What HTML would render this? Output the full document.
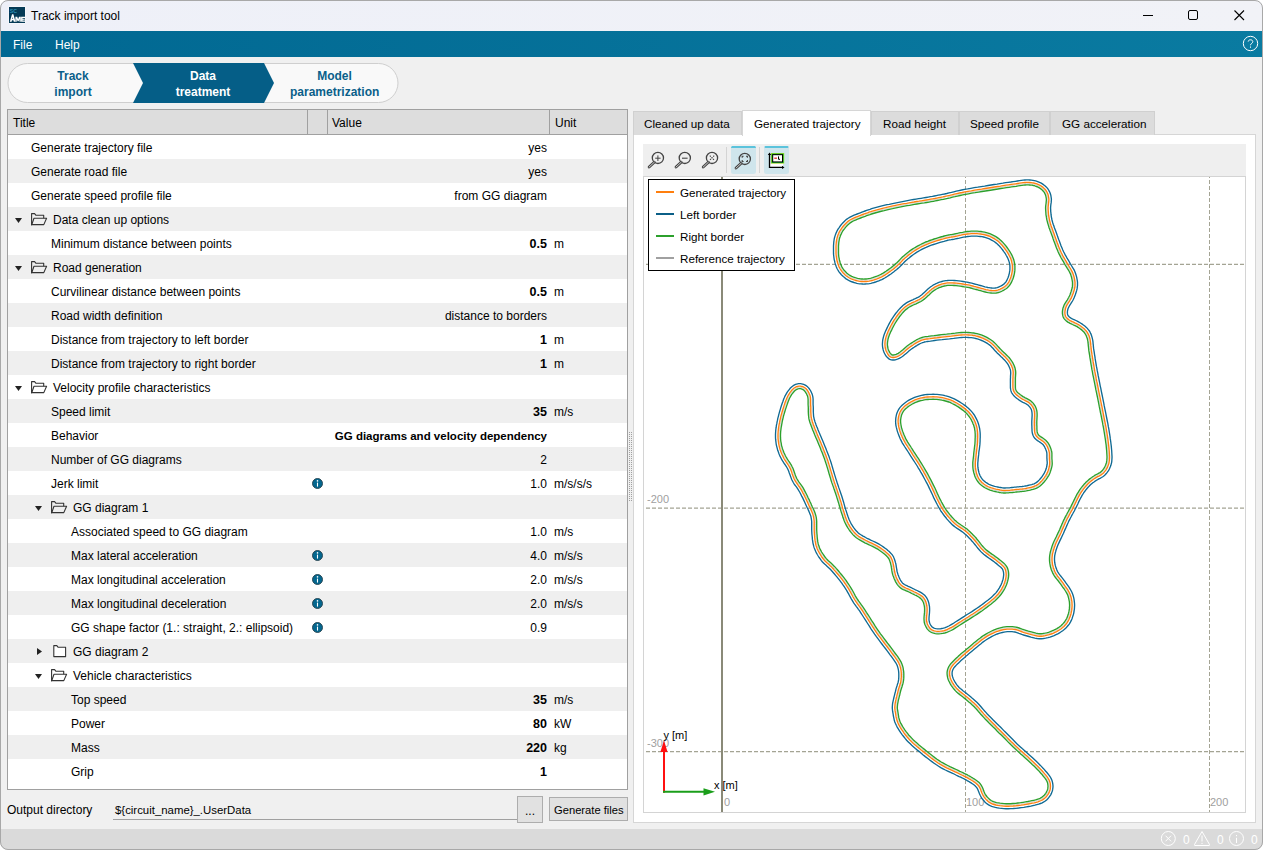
<!DOCTYPE html>
<html><head><meta charset="utf-8"><style>
*{box-sizing:border-box;margin:0;padding:0}
html,body{width:1263px;height:850px;overflow:hidden;background:#fff}
body{font-family:"Liberation Sans",sans-serif;font-size:12px;color:#000;position:relative}
.a{position:absolute}
.t{position:absolute;white-space:nowrap;line-height:14px}
#win{position:absolute;left:0;top:0;width:1263px;height:850px;background:#f0f0f0;overflow:hidden}
.row{position:absolute;left:0;width:619px;height:24px}
.g{background:#efefef}
.row .t{top:6px}
.v{position:absolute;right:80px;top:6px;white-space:nowrap;line-height:14px;text-align:right}
.u{position:absolute;left:546px;top:6px;white-space:nowrap;line-height:14px}
.b{font-weight:bold;font-size:12.5px;top:5.5px!important}
.bl{font-weight:bold;font-size:11.5px}
.info{position:absolute;left:304px;top:7px;width:11px;height:11px}
.tab{position:absolute;top:111px;height:24px;background:#dcdcdc;border:1px solid #d0d0d0;border-bottom:none}
.tab .t{top:5px;font-size:11.7px}
</style></head><body><div id="win">

<div class="a" style="left:0;top:0;width:1263px;height:31px;background:linear-gradient(90deg,#eef0f8,#f1f2f7)"></div>
<svg class="a" style="left:8px;top:6px" width="18" height="18" viewBox="0 0 18 18">
 <rect x="0.5" y="0.5" width="17" height="17" fill="#fff" opacity="0.8"/>
 <rect x="1" y="1" width="16" height="16" fill="#043a56"/>
 <text x="1.8" y="6.8" font-family="Liberation Sans" font-weight="bold" font-size="5.2" fill="#2a8fb5">SC</text>
 <path fill-rule="evenodd" d="M1.8 15.8 L4 8.3 H5.4 L7.5 15.8 H5.8 L5.4 14.2 H4 L3.6 15.8 Z M4.3 12.9 H5.1 L4.7 11 Z" fill="#fff"/>
 <path d="M7.4 15.8 V10.8 H9.2 L10.1 13.2 L11 10.8 H12.8 V15.8 H11.5 V13 L10.6 15.2 H9.6 L8.7 13 V15.8 Z" fill="#fff"/>
 <path d="M13.1 15.8 V10.8 H17 V12 H14.5 V12.8 H16.8 V13.8 H14.5 V14.6 H17 V15.8 Z" fill="#fff"/>
</svg>
<div class="t" style="left:31px;top:9px">Track import tool</div>
<svg class="a" style="left:1130px;top:0" width="133" height="31">
 <line x1="13" y1="15.5" x2="23" y2="15.5" stroke="#000" stroke-width="1"/>
 <rect x="58.5" y="10.5" width="9" height="9" rx="1.5" fill="none" stroke="#000" stroke-width="1"/>
 <path d="M104.5 10.5 L114 20 M114 10.5 L104.5 20" stroke="#000" stroke-width="1.1"/>
</svg>
<div class="a" style="left:0;top:31px;width:1263px;height:26px;background:linear-gradient(90deg,#016892,#0a7ba1)"></div>
<div class="t" style="left:13px;top:38px;color:#fff">File</div>
<div class="t" style="left:55px;top:38px;color:#fff">Help</div>
<svg class="a" style="left:1240px;top:33px" width="22" height="22">
 <circle cx="10.5" cy="10.5" r="7.2" fill="none" stroke="#fff" stroke-width="1"/>
 <path d="M8.2 8.6 C8.2 6.2 12.8 6.2 12.8 8.6 C12.8 10.3 10.5 10.4 10.5 12.3" fill="none" stroke="#fff" stroke-width="1"/>
 <rect x="10" y="13.5" width="1" height="1.2" fill="#fff"/>
</svg>


<svg class="a" style="left:0;top:57px" width="410" height="50">
 <path d="M27.5 6.5 H378.5 A19.5 19.5 0 0 1 378.5 45.5 H27.5 A19.5 19.5 0 0 1 27.5 6.5Z" fill="#f9f9f9" stroke="#cfcfcf"/>
 <path d="M133 6 H264 L274 26 L264 46 H133 L143 26Z" fill="#055e87"/>
</svg>
<div class="t" style="left:40px;top:68px;width:66px;text-align:center;font-weight:bold;color:#0a5f8a;line-height:16px">Track<br>import</div>
<div class="t" style="left:163px;top:68px;width:80px;text-align:center;font-weight:bold;color:#fff;line-height:16px">Data<br>treatment</div>
<div class="t" style="left:290px;top:68px;width:89px;text-align:center;font-weight:bold;color:#0a5f8a;line-height:16px">Model<br>parametrization</div>


<div class="a" style="left:7px;top:109px;width:621px;height:681px;border:1px solid #a0a0a0;background:#fff;overflow:hidden">
 <div class="a" style="left:0;top:0;width:619px;height:25px;background:#dddddd;border-bottom:1px solid #a0a0a0">
  <div class="t" style="left:5px;top:6px">Title</div>
  <div class="a" style="left:299px;top:0;width:1px;height:25px;background:#a0a0a0"></div>
  <div class="a" style="left:319px;top:0;width:1px;height:25px;background:#a0a0a0"></div>
  <div class="t" style="left:324px;top:6px">Value</div>
  <div class="a" style="left:541px;top:0;width:1px;height:25px;background:#a0a0a0"></div>
  <div class="t" style="left:547px;top:6px">Unit</div>
 </div>
 <div class="row" style="top:25px"><div class="t" style="left:23px">Generate trajectory file</div><div class="v">yes</div></div>
<div class="row g" style="top:49px"><div class="t" style="left:23px">Generate road file</div><div class="v">yes</div></div>
<div class="row" style="top:73px"><div class="t" style="left:23px">Generate speed profile file</div><div class="v">from GG diagram</div></div>
<div class="row g" style="top:97px"><svg class="a" style="left:7px;top:10px" width="9" height="8"><path d="M0 1 H7 L3.5 6Z" fill="#222"/></svg><svg class="a" style="left:23px;top:6px" width="17" height="14" viewBox="0 0 17 14"><path d="M0.6 12 V0.6 H3.6 L5 2.3 H12.7 V5.2" fill="none" stroke="#333" stroke-width="1.1" stroke-linejoin="round"/><path d="M0.6 12 L3 5.3 H15.6 L12.8 11.6 H0.6 Z" fill="none" stroke="#333" stroke-width="1.1" stroke-linejoin="round"/></svg><div class="t" style="left:45px">Data clean up options</div></div>
<div class="row" style="top:121px"><div class="t" style="left:43px">Minimum distance between points</div><div class="v b">0.5</div><div class="u">m</div></div>
<div class="row g" style="top:145px"><svg class="a" style="left:7px;top:10px" width="9" height="8"><path d="M0 1 H7 L3.5 6Z" fill="#222"/></svg><svg class="a" style="left:23px;top:6px" width="17" height="14" viewBox="0 0 17 14"><path d="M0.6 12 V0.6 H3.6 L5 2.3 H12.7 V5.2" fill="none" stroke="#333" stroke-width="1.1" stroke-linejoin="round"/><path d="M0.6 12 L3 5.3 H15.6 L12.8 11.6 H0.6 Z" fill="none" stroke="#333" stroke-width="1.1" stroke-linejoin="round"/></svg><div class="t" style="left:45px">Road generation</div></div>
<div class="row" style="top:169px"><div class="t" style="left:43px">Curvilinear distance between points</div><div class="v b">0.5</div><div class="u">m</div></div>
<div class="row g" style="top:193px"><div class="t" style="left:43px">Road width definition</div><div class="v">distance to borders</div></div>
<div class="row" style="top:217px"><div class="t" style="left:43px">Distance from trajectory to left border</div><div class="v b">1</div><div class="u">m</div></div>
<div class="row g" style="top:241px"><div class="t" style="left:43px">Distance from trajectory to right border</div><div class="v b">1</div><div class="u">m</div></div>
<div class="row" style="top:265px"><svg class="a" style="left:7px;top:10px" width="9" height="8"><path d="M0 1 H7 L3.5 6Z" fill="#222"/></svg><svg class="a" style="left:23px;top:6px" width="17" height="14" viewBox="0 0 17 14"><path d="M0.6 12 V0.6 H3.6 L5 2.3 H12.7 V5.2" fill="none" stroke="#333" stroke-width="1.1" stroke-linejoin="round"/><path d="M0.6 12 L3 5.3 H15.6 L12.8 11.6 H0.6 Z" fill="none" stroke="#333" stroke-width="1.1" stroke-linejoin="round"/></svg><div class="t" style="left:45px">Velocity profile characteristics</div></div>
<div class="row g" style="top:289px"><div class="t" style="left:43px">Speed limit</div><div class="v b">35</div><div class="u">m/s</div></div>
<div class="row" style="top:313px"><div class="t" style="left:43px">Behavior</div><div class="v bl">GG diagrams and velocity dependency</div></div>
<div class="row g" style="top:337px"><div class="t" style="left:43px">Number of GG diagrams</div><div class="v">2</div></div>
<div class="row" style="top:361px"><div class="t" style="left:43px">Jerk limit</div><svg class="info" viewBox="0 0 11 11"><circle cx="5.5" cy="5.5" r="5" fill="#04678f" stroke="#233f4c" stroke-width="0.9"/><circle cx="5.5" cy="2.9" r="0.8" fill="#fff"/><path d="M5.5 4.6 V8.6" stroke="#fff" stroke-width="1.1"/></svg><div class="v">1.0</div><div class="u">m/s/s/s</div></div>
<div class="row g" style="top:385px"><svg class="a" style="left:27px;top:10px" width="9" height="8"><path d="M0 1 H7 L3.5 6Z" fill="#222"/></svg><svg class="a" style="left:43px;top:6px" width="17" height="14" viewBox="0 0 17 14"><path d="M0.6 12 V0.6 H3.6 L5 2.3 H12.7 V5.2" fill="none" stroke="#333" stroke-width="1.1" stroke-linejoin="round"/><path d="M0.6 12 L3 5.3 H15.6 L12.8 11.6 H0.6 Z" fill="none" stroke="#333" stroke-width="1.1" stroke-linejoin="round"/></svg><div class="t" style="left:65px">GG diagram 1</div></div>
<div class="row" style="top:409px"><div class="t" style="left:63px">Associated speed to GG diagram</div><div class="v">1.0</div><div class="u">m/s</div></div>
<div class="row g" style="top:433px"><div class="t" style="left:63px">Max lateral acceleration</div><svg class="info" viewBox="0 0 11 11"><circle cx="5.5" cy="5.5" r="5" fill="#04678f" stroke="#233f4c" stroke-width="0.9"/><circle cx="5.5" cy="2.9" r="0.8" fill="#fff"/><path d="M5.5 4.6 V8.6" stroke="#fff" stroke-width="1.1"/></svg><div class="v">4.0</div><div class="u">m/s/s</div></div>
<div class="row" style="top:457px"><div class="t" style="left:63px">Max longitudinal acceleration</div><svg class="info" viewBox="0 0 11 11"><circle cx="5.5" cy="5.5" r="5" fill="#04678f" stroke="#233f4c" stroke-width="0.9"/><circle cx="5.5" cy="2.9" r="0.8" fill="#fff"/><path d="M5.5 4.6 V8.6" stroke="#fff" stroke-width="1.1"/></svg><div class="v">2.0</div><div class="u">m/s/s</div></div>
<div class="row g" style="top:481px"><div class="t" style="left:63px">Max longitudinal deceleration</div><svg class="info" viewBox="0 0 11 11"><circle cx="5.5" cy="5.5" r="5" fill="#04678f" stroke="#233f4c" stroke-width="0.9"/><circle cx="5.5" cy="2.9" r="0.8" fill="#fff"/><path d="M5.5 4.6 V8.6" stroke="#fff" stroke-width="1.1"/></svg><div class="v">2.0</div><div class="u">m/s/s</div></div>
<div class="row" style="top:505px"><div class="t" style="left:63px">GG shape factor (1.: straight, 2.: ellipsoid)</div><svg class="info" viewBox="0 0 11 11"><circle cx="5.5" cy="5.5" r="5" fill="#04678f" stroke="#233f4c" stroke-width="0.9"/><circle cx="5.5" cy="2.9" r="0.8" fill="#fff"/><path d="M5.5 4.6 V8.6" stroke="#fff" stroke-width="1.1"/></svg><div class="v">0.9</div></div>
<div class="row g" style="top:529px"><svg class="a" style="left:27px;top:9px" width="8" height="10"><path d="M2 0 V7 L7 3.5Z" fill="#222"/></svg><svg class="a" style="left:43px;top:6px" width="17" height="14" viewBox="0 0 17 14"><path d="M2.8 11.6 V0.6 H5.8 L7.2 2.3 H14.6 V11.6 Z" fill="#fff" stroke="#333" stroke-width="1.1" stroke-linejoin="round"/></svg><div class="t" style="left:65px">GG diagram 2</div></div>
<div class="row" style="top:553px"><svg class="a" style="left:27px;top:10px" width="9" height="8"><path d="M0 1 H7 L3.5 6Z" fill="#222"/></svg><svg class="a" style="left:43px;top:6px" width="17" height="14" viewBox="0 0 17 14"><path d="M0.6 12 V0.6 H3.6 L5 2.3 H12.7 V5.2" fill="none" stroke="#333" stroke-width="1.1" stroke-linejoin="round"/><path d="M0.6 12 L3 5.3 H15.6 L12.8 11.6 H0.6 Z" fill="none" stroke="#333" stroke-width="1.1" stroke-linejoin="round"/></svg><div class="t" style="left:65px">Vehicle characteristics</div></div>
<div class="row g" style="top:577px"><div class="t" style="left:63px">Top speed</div><div class="v b">35</div><div class="u">m/s</div></div>
<div class="row" style="top:601px"><div class="t" style="left:63px">Power</div><div class="v b">80</div><div class="u">kW</div></div>
<div class="row g" style="top:625px"><div class="t" style="left:63px">Mass</div><div class="v b">220</div><div class="u">kg</div></div>
<div class="row" style="top:649px"><div class="t" style="left:63px">Grip</div><div class="v b">1</div></div>
</div>

<div class="t" style="left:7px;top:803px">Output directory</div>
<div class="t" style="left:115px;top:803px;font-size:11.4px">${circuit_name}_.UserData</div>
<div class="a" style="left:113px;top:819px;width:405px;height:1px;background:#a0a0a0"></div>
<div class="a" style="left:517px;top:796px;width:26px;height:27px;background:#e1e1e1;border:1px solid #adadad"><div class="t" style="left:7px;top:7px">...</div></div>
<div class="a" style="left:549px;top:797px;width:79px;height:24px;background:#e1e1e1;border:1px solid #adadad"><div class="t" style="left:4px;top:5px;font-size:11.2px">Generate files</div></div>
<div class="a" style="left:0;top:829px;width:1263px;height:21px;background:#dadada"></div>
<svg class="a" style="left:629px;top:432px" width="4" height="70"><g fill="#a0a0a0"><rect x="0" y="0" width="1" height="1"/><rect x="2" y="0" width="1" height="1"/><rect x="0" y="2" width="1" height="1"/><rect x="2" y="2" width="1" height="1"/><rect x="0" y="4" width="1" height="1"/><rect x="2" y="4" width="1" height="1"/><rect x="0" y="6" width="1" height="1"/><rect x="2" y="6" width="1" height="1"/><rect x="0" y="8" width="1" height="1"/><rect x="2" y="8" width="1" height="1"/><rect x="0" y="10" width="1" height="1"/><rect x="2" y="10" width="1" height="1"/><rect x="0" y="12" width="1" height="1"/><rect x="2" y="12" width="1" height="1"/><rect x="0" y="14" width="1" height="1"/><rect x="2" y="14" width="1" height="1"/><rect x="0" y="16" width="1" height="1"/><rect x="2" y="16" width="1" height="1"/><rect x="0" y="18" width="1" height="1"/><rect x="2" y="18" width="1" height="1"/><rect x="0" y="20" width="1" height="1"/><rect x="2" y="20" width="1" height="1"/><rect x="0" y="22" width="1" height="1"/><rect x="2" y="22" width="1" height="1"/><rect x="0" y="24" width="1" height="1"/><rect x="2" y="24" width="1" height="1"/><rect x="0" y="26" width="1" height="1"/><rect x="2" y="26" width="1" height="1"/><rect x="0" y="28" width="1" height="1"/><rect x="2" y="28" width="1" height="1"/><rect x="0" y="30" width="1" height="1"/><rect x="2" y="30" width="1" height="1"/><rect x="0" y="32" width="1" height="1"/><rect x="2" y="32" width="1" height="1"/><rect x="0" y="34" width="1" height="1"/><rect x="2" y="34" width="1" height="1"/><rect x="0" y="36" width="1" height="1"/><rect x="2" y="36" width="1" height="1"/><rect x="0" y="38" width="1" height="1"/><rect x="2" y="38" width="1" height="1"/><rect x="0" y="40" width="1" height="1"/><rect x="2" y="40" width="1" height="1"/><rect x="0" y="42" width="1" height="1"/><rect x="2" y="42" width="1" height="1"/><rect x="0" y="44" width="1" height="1"/><rect x="2" y="44" width="1" height="1"/><rect x="0" y="46" width="1" height="1"/><rect x="2" y="46" width="1" height="1"/><rect x="0" y="48" width="1" height="1"/><rect x="2" y="48" width="1" height="1"/><rect x="0" y="50" width="1" height="1"/><rect x="2" y="50" width="1" height="1"/><rect x="0" y="52" width="1" height="1"/><rect x="2" y="52" width="1" height="1"/><rect x="0" y="54" width="1" height="1"/><rect x="2" y="54" width="1" height="1"/><rect x="0" y="56" width="1" height="1"/><rect x="2" y="56" width="1" height="1"/><rect x="0" y="58" width="1" height="1"/><rect x="2" y="58" width="1" height="1"/><rect x="0" y="60" width="1" height="1"/><rect x="2" y="60" width="1" height="1"/><rect x="0" y="62" width="1" height="1"/><rect x="2" y="62" width="1" height="1"/><rect x="0" y="64" width="1" height="1"/><rect x="2" y="64" width="1" height="1"/><rect x="0" y="66" width="1" height="1"/><rect x="2" y="66" width="1" height="1"/><rect x="0" y="68" width="1" height="1"/><rect x="2" y="68" width="1" height="1"/></g></svg>
<svg class="a" style="left:1150px;top:829px" width="113" height="21">
 <g fill="none" stroke="#fff" stroke-width="1">
  <circle cx="18.3" cy="9.5" r="7"/>
  <path d="M15.5 6.7 L21.1 12.3 M21.1 6.7 L15.5 12.3"/>
  <path d="M52 2.5 L59.5 15.5 Q60 16.5 59 16.5 H45 Q44 16.5 44.5 15.5Z"/>
  <path d="M52 6.5 V12.5 M52 13.8 V15"/>
  <circle cx="86.5" cy="9.5" r="7"/>
  <path d="M86.5 6 V7.2 M86.5 8.8 V14"/>
 </g>
 <g font-family="Liberation Sans" font-size="12" fill="#fff">
  <text x="33" y="15">0</text><text x="67" y="15">0</text><text x="101" y="15">0</text>
 </g>
</svg>
<div class="a" style="left:0;top:0;width:1263px;height:850px;border:1px solid #a8a8a8;border-radius:8px 8px 8px 8px;pointer-events:none;box-shadow:0 0 0 6px #fff"></div>


<div class="a" style="left:633px;top:134px;width:623px;height:689px;background:#fff;border:1px solid #d6d6d6"></div>
<div class="tab" style="left:633px;width:109px"><div class="t" style="left:10px">Cleaned up data</div></div>
<div class="a" style="left:742px;top:110px;width:129px;height:26px;background:#fff;border:1px solid #d6d6d6;border-bottom:none"><div class="t" style="left:11px;top:6px;font-size:11.7px">Generated trajectory</div></div>
<div class="tab" style="left:871px;width:88px"><div class="t" style="left:11px">Road height</div></div>
<div class="tab" style="left:959px;width:91px"><div class="t" style="left:10px">Speed profile</div></div>
<div class="tab" style="left:1050px;width:105px"><div class="t" style="left:11px">GG acceleration</div></div>
<div class="a" style="left:643px;top:144px;width:603px;height:32px;background:#efefef"></div>


<svg class="a" style="left:0;top:0" width="1263" height="850">
 <rect x="643.5" y="176.5" width="602" height="636" fill="#fff" stroke="#d4d4d4"/>
 <g stroke="#a4a494" stroke-width="1.2" stroke-dasharray="4,2" fill="none">
  <line x1="646" y1="264.3" x2="1245" y2="264.3"/>
  <line x1="646" y1="508.2" x2="1245" y2="508.2"/>
  <line x1="646" y1="751.7" x2="1245" y2="751.7"/>
 </g>
 <g stroke="#a4a494" stroke-width="1" stroke-dasharray="4,2" fill="none">
  <line x1="965.5" y1="174" x2="965.5" y2="812"/>
  <line x1="1209.5" y1="174" x2="1209.5" y2="812"/>
 </g>
 <rect x="644" y="172" width="601" height="4.5" fill="#efefef"/>
 <line x1="644" y1="176.5" x2="1245" y2="176.5" stroke="#d4d4d4"/>
 <line x1="722" y1="177" x2="722" y2="812" stroke="#8a8a78" stroke-width="2"/>
 <g font-family="Liberation Sans" font-size="11" fill="#a0a0a0">
  <text x="647" y="503">-200</text>
  <text x="647" y="747">-300</text>
  <text x="724" y="806">0</text>
  <text x="966" y="806">100</text>
  <text x="1210" y="806">200</text>
 </g>
 <polyline points="945.3,197.6 943.0,198.0 941.0,198.5 939.0,198.9 937.0,199.3 935.0,199.6 933.1,200.0 931.0,200.4 928.8,200.8 926.5,201.2 924.1,201.6 921.7,202.0 919.2,202.3 916.7,202.7 914.2,203.1 911.8,203.5 909.3,204.0 906.9,204.4 904.4,204.9 901.9,205.4 899.4,205.9 896.9,206.4 894.5,206.9 892.2,207.4 890.0,207.9 887.8,208.4 885.8,208.8 883.8,209.3 881.8,209.8 880.0,210.3 878.1,210.7 876.3,211.2 874.5,211.8 872.8,212.3 871.1,212.8 869.5,213.4 867.9,213.9 866.3,214.5 864.7,215.0 863.2,215.6 861.6,216.2 860.1,216.8 858.5,217.4 857.0,218.0 855.5,218.6 854.1,219.2 852.7,219.9 851.5,220.6 850.3,221.3 849.1,222.1 848.1,223.0 847.1,223.9 846.1,224.8 845.2,225.8 844.3,226.8 843.5,227.8 842.8,228.8 842.1,229.8 841.4,230.9 840.8,231.9 840.2,233.0 839.7,234.1 839.2,235.2 838.8,236.3 838.5,237.4 838.1,238.6 837.9,239.8 837.7,241.0 837.5,242.3 837.4,243.6 837.3,244.9 837.2,246.2 837.2,247.5 837.2,248.9 837.2,250.3 837.2,251.8 837.2,253.2 837.3,254.7 837.5,256.1 837.6,257.5 837.9,258.9 838.2,260.2 838.5,261.5 838.9,262.9 839.3,264.1 839.8,265.4 840.3,266.6 840.9,267.8 841.5,268.9 842.2,269.9 843.0,271.0 843.9,272.0 844.8,273.0 845.8,273.9 846.8,274.8 847.9,275.6 848.9,276.3 850.1,276.9 851.2,277.5 852.5,278.1 853.7,278.6 855.0,279.0 856.4,279.4 857.6,279.7 858.9,279.9 860.1,280.1 861.4,280.3 862.6,280.3 863.8,280.4 865.0,280.3 866.2,280.3 867.5,280.1 868.8,279.9 870.2,279.7 871.6,279.3 873.0,278.9 874.5,278.5 875.9,278.0 877.4,277.4 878.8,276.8 880.2,276.2 881.5,275.6 882.8,274.8 884.1,274.0 885.4,273.2 886.7,272.4 887.9,271.5 889.1,270.7 890.3,269.8 891.4,269.0 892.4,268.2 893.4,267.4 894.4,266.6 895.3,265.8 896.2,265.0 897.1,264.2 898.0,263.4 898.8,262.6 899.6,261.9 900.3,261.1 901.0,260.3 901.8,259.5 902.6,258.7 903.5,257.8 904.5,256.9 905.6,256.0 906.8,255.0 908.0,254.0 909.3,253.0 910.7,252.0 912.1,251.0 913.5,250.0 915.0,249.1 916.5,248.2 918.0,247.3 919.6,246.5 921.2,245.6 922.8,244.8 924.6,244.0 926.3,243.2 928.2,242.5 930.1,241.7 932.3,241.0 934.5,240.3 936.7,239.5 939.0,238.9 941.1,238.3 943.0,237.7 944.7,237.2 946.1,236.9 947.2,236.6 948.1,236.4 948.9,236.3 949.7,236.2 950.6,236.0 951.6,235.9 953.0,235.6 954.6,235.3 956.5,234.9 958.5,234.4 960.7,234.0 962.9,233.5 965.1,233.1 967.2,232.8 969.3,232.6 971.3,232.5 973.2,232.4 975.2,232.4 977.1,232.5 979.0,232.6 980.8,232.8 982.6,233.1 984.4,233.4 986.1,233.8 987.7,234.3 989.3,234.9 990.8,235.6 992.4,236.3 993.8,237.0 995.2,237.8 996.6,238.7 997.9,239.6 999.1,240.7 1000.3,241.7 1001.5,242.8 1002.6,244.0 1003.6,245.2 1004.7,246.5 1005.7,247.8 1006.7,249.1 1007.6,250.6 1008.6,252.1 1009.5,253.6 1010.4,255.2 1011.2,256.8 1011.9,258.4 1012.4,259.9 1012.9,261.5 1013.2,263.0 1013.4,264.6 1013.6,266.1 1013.6,267.7 1013.6,269.2 1013.5,270.8 1013.3,272.3 1013.0,273.9 1012.6,275.5 1012.1,277.1 1011.6,278.7 1010.9,280.3 1010.2,281.8 1009.4,283.3 1008.6,284.5 1007.6,285.7 1006.5,286.7 1005.3,287.6 1004.1,288.5 1002.9,289.2 1001.6,289.8 1000.4,290.4 999.2,290.8 998.1,291.2 996.9,291.5 995.8,291.7 994.7,291.8 993.5,291.8 992.4,291.8 991.1,291.7 989.8,291.6 988.5,291.4 987.0,291.1 985.5,290.7 984.0,290.3 982.4,289.9 980.9,289.5 979.4,289.0 977.9,288.7 976.5,288.3 975.1,287.9 973.7,287.5 972.3,287.1 970.9,286.8 969.5,286.4 967.9,286.1 966.3,285.8 964.5,285.5 962.5,285.2 960.4,284.9 958.3,284.6 956.1,284.4 954.1,284.2 952.2,284.0 950.5,284.0 949.0,284.0 947.6,284.1 946.3,284.3 945.1,284.5 944.0,284.8 942.9,285.1 941.8,285.4 940.7,285.7 939.6,286.1 938.6,286.5 937.7,286.9 936.8,287.4 935.8,287.9 934.9,288.4 933.9,289.0 932.9,289.8 931.8,290.6 930.6,291.6 929.4,292.8 928.1,293.9 926.8,295.1 925.6,296.3 924.5,297.3 923.5,298.1 922.6,298.8 921.9,299.3 921.3,299.7 920.7,300.0 920.2,300.3 919.6,300.6 918.8,301.0 917.9,301.5 916.8,302.0 915.6,302.6 914.2,303.2 912.8,303.8 911.4,304.5 910.0,305.2 908.7,305.9 907.5,306.7 906.4,307.5 905.3,308.4 904.2,309.4 903.2,310.4 902.2,311.5 901.2,312.6 900.2,313.7 899.2,314.9 898.3,316.2 897.3,317.5 896.3,318.9 895.4,320.4 894.5,321.8 893.6,323.3 892.8,324.8 892.0,326.4 891.2,327.9 890.4,329.5 889.6,331.1 888.9,332.7 888.2,334.3 887.6,335.9 887.1,337.4 886.8,338.9 886.5,340.3 886.3,341.6 886.2,342.9 886.1,344.2 886.2,345.4 886.3,346.6 886.5,347.8 886.8,348.9 887.1,350.0 887.6,351.1 888.1,352.2 888.7,353.3 889.4,354.2 890.1,355.0 890.8,355.6 891.4,356.0 892.1,356.2 892.8,356.3 893.7,356.3 894.6,356.2 895.6,355.9 896.6,355.5 897.7,355.0 898.8,354.5 900.0,353.8 901.2,352.9 902.5,351.8 903.8,350.6 905.1,349.4 906.5,348.2 907.9,347.1 909.3,346.0 910.6,345.1 912.0,344.2 913.4,343.3 914.7,342.4 916.1,341.6 917.5,340.9 918.8,340.2 920.1,339.6 921.4,339.1 922.5,338.7 923.5,338.4 924.6,338.2 925.7,338.0 926.9,337.8 928.3,337.7 929.9,337.4 931.9,337.1 934.1,336.8 936.6,336.6 939.1,336.3 941.7,336.0 944.3,335.7 946.8,335.4 949.1,335.2 951.2,335.0 953.3,334.7 955.3,334.5 957.4,334.2 959.3,334.0 961.2,333.8 963.1,333.7 965.0,333.7 966.8,333.7 968.5,333.8 970.2,333.9 971.9,334.1 973.5,334.3 975.1,334.6 976.7,334.9 978.3,335.3 979.9,335.9 981.6,336.4 983.2,337.1 984.8,337.8 986.3,338.6 987.8,339.4 989.3,340.3 990.7,341.2 992.0,342.3 993.3,343.4 994.5,344.5 995.7,345.8 996.8,347.0 997.9,348.2 998.9,349.4 1000.1,350.6 1001.2,351.7 1002.4,352.8 1003.6,354.0 1004.9,355.1 1006.1,356.3 1007.2,357.5 1008.3,358.7 1009.2,359.9 1010.1,361.1 1010.9,362.2 1011.6,363.4 1012.2,364.6 1012.8,365.8 1013.3,367.0 1013.7,368.2 1014.1,369.6 1014.3,370.9 1014.4,372.3 1014.4,373.7 1014.3,375.1 1014.2,376.5 1014.2,377.8 1014.1,379.2 1014.1,380.5 1014.1,381.9 1014.1,383.3 1014.1,384.7 1014.1,386.1 1014.1,387.4 1014.2,388.6 1014.5,389.7 1014.8,390.7 1015.3,391.6 1015.9,392.5 1016.6,393.3 1017.4,394.0 1018.3,394.8 1019.3,395.5 1020.3,396.3 1021.3,397.0 1022.3,397.7 1023.4,398.3 1024.6,399.0 1025.9,399.6 1027.2,400.2 1028.4,400.9 1029.6,401.7 1030.6,402.5 1031.5,403.4 1032.3,404.2 1033.0,405.1 1033.6,406.0 1034.2,407.1 1034.7,408.2 1035.1,409.4 1035.5,410.8 1035.7,412.3 1035.8,414.1 1035.8,415.9 1035.7,417.8 1035.6,419.6 1035.5,421.5 1035.5,423.2 1035.5,424.8 1035.6,426.3 1035.6,427.7 1035.7,429.1 1035.7,430.4 1035.9,431.6 1036.1,432.8 1036.4,433.9 1036.9,434.9 1037.6,435.8 1038.6,436.7 1039.7,437.6 1041.0,438.5 1042.3,439.4 1043.6,440.3 1044.9,441.3 1045.9,442.3 1046.7,443.3 1047.4,444.4 1048.0,445.4 1048.6,446.5 1049.0,447.5 1049.4,448.5 1049.8,449.5 1050.1,450.5 1050.3,451.5 1050.5,452.5 1050.6,453.4 1050.6,454.3 1050.6,455.3 1050.6,456.2 1050.6,457.1 1050.6,458.0 1050.6,458.9 1050.7,459.8 1050.8,460.8 1050.8,461.8 1050.9,462.8 1050.9,463.9 1050.8,465.0 1050.6,466.1 1050.3,467.3 1050.0,468.5 1049.7,469.7 1049.3,470.9 1048.8,472.2 1048.3,473.4 1047.6,474.7 1046.9,475.9 1046.1,477.2 1045.2,478.5 1044.2,479.8 1043.1,481.2 1042.0,482.4 1040.8,483.6 1039.5,484.7 1038.3,485.7 1037.0,486.5 1035.6,487.1 1034.2,487.7 1032.8,488.1 1031.4,488.5 1030.0,488.8 1028.6,489.1 1027.3,489.4 1026.1,489.6 1024.9,489.9 1023.7,490.0 1022.5,490.1 1021.3,490.3 1020.1,490.4 1018.9,490.5 1017.7,490.6 1016.4,490.7 1015.1,490.9 1013.7,491.0 1012.3,491.2 1010.9,491.3 1009.6,491.4 1008.3,491.5 1007.2,491.6 1006.1,491.6 1005.2,491.7 1004.4,491.7 1003.6,491.7 1002.8,491.6 1001.9,491.5 1000.9,491.4 999.8,491.2 998.5,490.9 997.0,490.6 995.4,490.3 993.7,489.8 992.1,489.4 990.4,488.9 988.8,488.3 987.4,487.6 986.0,486.8 984.7,486.0 983.4,485.2 982.2,484.2 981.1,483.2 980.0,482.2 979.0,481.0 978.1,479.8 977.3,478.4 976.6,477.0 976.0,475.5 975.5,474.0 975.1,472.4 974.7,470.8 974.4,469.1 974.2,467.5 974.1,465.9 974.1,464.2 974.1,462.5 974.3,460.7 974.5,459.0 974.7,457.3 974.8,455.6 975.0,454.0 975.2,452.3 975.4,450.7 975.6,449.0 975.8,447.4 976.0,445.7 976.2,444.1 976.3,442.5 976.4,440.8 976.4,439.2 976.5,437.5 976.5,435.9 976.5,434.2 976.4,432.6 976.2,431.0 976.0,429.4 975.7,427.9 975.3,426.4 974.9,424.9 974.4,423.4 973.8,421.9 973.1,420.5 972.4,419.2 971.6,417.8 970.8,416.6 969.9,415.4 969.0,414.2 968.1,413.1 967.0,412.1 965.9,411.1 964.7,410.1 963.5,409.1 962.2,408.1 960.8,407.1 959.3,406.1 957.7,405.0 956.1,404.1 954.4,403.1 952.7,402.3 951.0,401.5 949.3,400.8 947.6,400.2 945.8,399.7 944.0,399.3 942.2,398.9 940.4,398.6 938.6,398.3 936.7,398.1 934.9,398.0 933.1,397.9 931.3,398.0 929.4,398.0 927.6,398.2 925.8,398.4 924.0,398.7 922.2,399.0 920.6,399.4 919.0,399.8 917.5,400.3 915.9,400.9 914.5,401.5 913.1,402.1 911.7,402.9 910.4,403.6 909.2,404.4 908.0,405.2 906.8,406.1 905.7,407.0 904.7,407.9 903.7,408.9 902.9,409.9 902.1,410.9 901.5,412.1 900.9,413.2 900.4,414.5 900.0,415.8 899.7,417.2 899.5,418.6 899.3,420.0 899.3,421.5 899.4,423.1 899.6,424.7 899.9,426.4 900.3,428.2 900.9,430.0 901.5,431.9 902.1,433.7 902.9,435.6 903.7,437.4 904.6,439.2 905.5,441.0 906.6,442.7 907.7,444.5 908.9,446.3 910.1,448.2 911.3,450.0 912.5,452.0 913.7,453.9 915.0,455.9 916.3,457.9 917.7,460.0 919.0,462.0 920.3,464.1 921.6,466.1 922.8,468.2 924.0,470.2 925.2,472.3 926.3,474.3 927.5,476.4 928.6,478.4 929.6,480.5 930.7,482.5 931.7,484.5 932.7,486.4 933.6,488.4 934.5,490.4 935.4,492.3 936.2,494.2 937.1,496.0 937.9,497.8 938.8,499.5 939.6,501.1 940.4,502.6 941.1,504.0 941.9,505.4 942.6,506.7 943.4,508.1 944.3,509.4 945.3,510.8 946.3,512.2 947.5,513.7 948.6,515.2 949.9,516.7 951.1,518.1 952.4,519.5 953.7,520.9 955.0,522.1 956.3,523.3 957.8,524.3 959.2,525.4 960.7,526.4 962.2,527.3 963.7,528.3 965.1,529.3 966.5,530.4 967.7,531.4 968.8,532.4 969.8,533.4 970.8,534.4 971.8,535.4 972.8,536.4 973.8,537.5 974.9,538.7 976.0,540.0 977.2,541.4 978.4,542.9 979.5,544.4 980.7,545.9 982.0,547.4 983.3,548.8 984.6,550.1 986.1,551.4 987.7,552.7 989.4,553.9 991.2,555.2 993.0,556.4 994.7,557.6 996.3,558.8 997.7,560.0 999.1,561.0 1000.3,562.1 1001.6,563.0 1002.7,564.0 1003.8,565.0 1004.8,566.1 1005.6,567.3 1006.3,568.6 1006.8,570.0 1007.1,571.5 1007.3,573.0 1007.4,574.6 1007.3,576.2 1007.1,577.8 1006.8,579.4 1006.4,581.0 1005.8,582.7 1005.2,584.4 1004.5,586.2 1003.6,587.9 1002.6,589.7 1001.5,591.5 1000.3,593.3 998.9,595.0 997.4,596.7 995.7,598.3 994.0,599.9 992.1,601.6 990.1,603.2 988.0,604.8 985.9,606.4 983.7,608.0 981.4,609.6 979.0,611.3 976.5,613.0 973.9,614.7 971.3,616.3 968.7,618.0 966.2,619.5 963.8,621.0 961.5,622.5 959.3,623.9 957.0,625.4 954.8,626.8 952.6,628.1 950.5,629.3 948.4,630.3 946.4,631.1 944.4,631.7 942.5,632.2 940.6,632.4 938.8,632.5 937.1,632.5 935.5,632.3 933.9,632.0 932.5,631.5 931.2,630.8 930.1,630.0 929.0,629.0 928.1,627.9 927.3,626.6 926.6,625.3 926.1,623.8 925.6,622.2 925.4,620.5 925.3,618.6 925.4,616.6 925.6,614.5 925.8,612.5 925.9,610.5 925.9,608.7 925.8,607.1 925.6,605.7 925.3,604.4 925.0,603.1 924.6,602.0 924.1,600.9 923.5,599.9 922.9,598.9 922.1,597.9 921.1,597.0 919.9,596.2 918.5,595.4 917.0,594.6 915.4,593.8 913.8,593.1 912.3,592.3 910.9,591.6 909.5,590.9 908.1,590.2 906.7,589.7 905.3,589.1 903.9,588.4 902.6,587.7 901.3,586.9 900.2,585.9 899.1,584.8 898.2,583.6 897.4,582.3 896.7,581.0 896.0,579.6 895.4,578.2 894.9,576.8 894.4,575.4 893.9,573.9 893.5,572.3 893.2,570.7 892.9,569.0 892.7,567.5 892.4,566.0 892.2,564.6 891.8,563.3 891.5,562.2 891.2,561.2 890.9,560.3 890.6,559.5 890.3,558.7 889.9,558.0 889.3,557.2 888.6,556.3 887.7,555.3 886.7,554.3 885.5,553.3 884.2,552.2 882.9,551.2 881.5,550.1 880.0,549.1 878.5,548.1 876.8,547.2 875.0,546.2 873.1,545.3 871.1,544.3 869.2,543.4 867.2,542.5 865.4,541.6 863.8,540.8 862.4,540.0 861.2,539.3 860.0,538.6 858.9,537.9 857.8,537.2 856.8,536.5 855.8,535.6 854.8,534.6 853.7,533.5 852.7,532.3 851.6,531.1 850.6,529.7 849.7,528.3 848.8,526.9 847.9,525.5 847.1,524.1 846.4,522.6 845.8,521.2 845.2,519.8 844.7,518.3 844.2,516.9 843.7,515.3 843.2,513.8 842.7,512.2 842.1,510.5 841.6,508.7 841.1,507.0 840.5,505.1 840.0,503.3 839.4,501.4 838.9,499.4 838.3,497.5 837.6,495.5 836.9,493.4 836.2,491.3 835.4,489.1 834.7,486.9 833.9,484.7 833.2,482.5 832.5,480.3 831.7,478.0 831.0,475.7 830.4,473.3 829.7,470.9 829.0,468.6 828.3,466.2 827.6,464.0 826.9,461.8 826.1,459.7 825.4,457.6 824.6,455.6 823.9,453.6 823.1,451.6 822.3,449.7 821.6,447.8 820.8,445.9 820.0,443.9 819.2,442.0 818.4,440.1 817.6,438.2 816.8,436.4 816.0,434.6 815.3,432.8 814.6,431.0 813.9,429.4 813.3,427.8 812.7,426.2 812.1,424.7 811.5,423.1 811.0,421.6 810.6,420.0 810.2,418.4 810.0,416.8 809.8,415.2 809.7,413.5 809.6,411.9 809.6,410.4 809.6,408.8 809.6,407.4 809.5,405.9 809.4,404.6 809.4,403.2 809.4,401.9 809.4,400.7 809.4,399.5 809.3,398.4 809.2,397.3 808.9,396.3 808.6,395.3 808.2,394.3 807.8,393.4 807.3,392.4 806.7,391.6 806.1,390.8 805.6,390.1 805.0,389.5 804.4,389.0 803.7,388.5 803.1,388.2 802.4,387.8 801.7,387.6 801.0,387.4 800.3,387.3 799.6,387.3 799.0,387.3 798.3,387.4 797.6,387.6 797.0,387.8 796.3,388.2 795.6,388.5 794.9,389.0 794.3,389.5 793.6,390.1 792.9,390.8 792.2,391.6 791.5,392.5 790.9,393.4 790.2,394.4 789.6,395.5 789.0,396.6 788.4,397.7 787.8,398.9 787.3,400.2 786.8,401.6 786.2,403.0 785.7,404.5 785.2,405.9 784.7,407.5 784.2,409.0 783.7,410.7 783.2,412.3 782.8,414.1 782.3,415.8 781.9,417.5 781.4,419.2 781.1,420.9 780.7,422.6 780.4,424.3 780.1,426.1 779.8,427.8 779.6,429.4 779.4,431.1 779.3,432.7 779.2,434.3 779.2,435.9 779.2,437.4 779.3,439.0 779.5,440.5 779.6,442.0 779.9,443.4 780.1,444.9 780.5,446.3 780.8,447.7 781.3,449.1 781.7,450.5 782.3,451.9 782.8,453.2 783.4,454.5 784.0,455.9 784.7,457.1 785.3,458.4 786.1,459.6 786.8,460.7 787.7,461.9 788.5,463.1 789.3,464.3 790.1,465.7 790.9,467.1 791.6,468.6 792.2,470.1 792.8,471.7 793.4,473.3 793.9,474.9 794.5,476.5 795.1,478.0 795.8,479.4 796.5,480.6 797.2,481.8 798.0,482.9 798.8,483.9 799.6,485.1 800.5,486.3 801.4,487.6 802.2,489.1 803.1,490.7 804.1,492.5 805.0,494.4 806.0,496.3 807.0,498.3 807.9,500.2 808.8,502.1 809.6,503.9 810.4,505.6 811.1,507.2 811.9,508.8 812.6,510.4 813.3,512.1 813.9,513.8 814.4,515.5 814.9,517.4 815.2,519.4 815.4,521.4 815.4,523.5 815.4,525.7 815.4,527.8 815.4,529.9 815.5,531.8 815.6,533.7 815.8,535.5 815.9,537.2 816.1,538.9 816.3,540.6 816.6,542.1 816.9,543.7 817.3,545.2 817.7,546.7 818.3,548.2 819.0,549.7 819.7,551.2 820.5,552.6 821.4,554.1 822.3,555.4 823.2,556.8 824.1,558.1 825.1,559.2 826.1,560.3 827.2,561.4 828.3,562.4 829.5,563.4 830.7,564.5 831.8,565.6 833.0,566.8 834.1,568.0 835.2,569.3 836.4,570.6 837.5,571.9 838.6,573.2 839.7,574.5 840.8,575.9 841.8,577.2 842.8,578.4 843.8,579.7 844.7,581.0 845.7,582.3 846.6,583.5 847.4,584.9 848.3,586.2 849.2,587.6 850.1,589.0 850.9,590.5 851.8,592.0 852.6,593.5 853.4,595.0 854.2,596.4 855.0,597.9 855.9,599.4 856.8,600.7 857.7,602.0 858.5,603.2 859.4,604.4 860.4,605.7 861.4,607.2 862.6,608.8 863.9,610.7 865.4,613.0 867.0,615.5 868.7,618.2 870.5,621.0 872.3,623.9 874.1,626.8 875.9,629.5 877.7,632.1 879.4,634.6 881.2,637.0 883.0,639.4 884.8,641.8 886.6,644.0 888.3,646.3 890.0,648.4 891.5,650.5 892.9,652.4 894.2,654.2 895.6,656.0 896.8,657.6 897.9,659.3 899.0,661.0 899.9,662.7 900.7,664.5 901.3,666.3 901.8,668.1 902.1,670.0 902.4,671.8 902.5,673.6 902.5,675.4 902.5,677.1 902.4,678.8 902.2,680.5 901.9,682.1 901.5,683.6 901.1,685.1 900.6,686.6 900.1,688.1 899.7,689.6 899.3,691.2 898.9,692.9 898.4,694.7 897.9,696.5 897.5,698.3 897.1,700.1 896.7,701.8 896.4,703.4 896.2,704.9 896.1,706.1 896.0,707.1 896.0,708.1 896.1,708.9 896.2,709.8 896.3,710.7 896.5,711.7 896.7,712.8 896.9,714.0 897.1,715.3 897.3,716.6 897.6,718.0 897.9,719.3 898.3,720.7 898.9,722.2 899.6,723.7 900.4,725.3 901.4,727.0 902.6,728.7 903.8,730.6 905.1,732.4 906.5,734.2 907.9,736.0 909.4,737.7 910.9,739.3 912.5,740.9 914.2,742.5 916.0,744.1 917.8,745.7 919.7,747.2 921.6,748.8 923.6,750.4 925.6,752.0 927.6,753.7 929.7,755.3 931.9,757.0 934.1,758.6 936.2,760.2 938.4,761.7 940.5,763.1 942.7,764.4 944.9,765.6 947.1,766.7 949.3,767.8 951.5,768.8 953.6,769.8 955.7,770.7 957.5,771.6 959.2,772.5 960.8,773.2 962.3,773.9 963.7,774.6 965.0,775.2 966.3,775.9 967.7,776.6 969.0,777.4 970.3,778.2 971.7,778.9 973.0,779.8 974.4,780.6 975.7,781.5 976.9,782.5 978.1,783.6 979.2,784.8 980.2,786.1 981.0,787.6 981.7,789.2 982.3,790.7 982.9,792.3 983.5,793.7 984.2,795.1 985.0,796.2 985.8,797.3 986.7,798.3 987.6,799.2 988.5,800.1 989.4,800.9 990.5,801.6 991.7,802.3 993.0,802.9 994.5,803.4 996.2,803.8 998.0,804.2 999.9,804.5 1001.9,804.7 1004.0,804.9 1006.1,805.0 1008.3,805.0 1010.6,805.0 1013.0,804.8 1015.6,804.6 1018.2,804.3 1020.8,804.0 1023.3,803.6 1025.8,803.2 1028.0,802.8 1030.1,802.4 1032.1,802.0 1034.0,801.6 1035.8,801.1 1037.5,800.6 1039.1,800.1 1040.6,799.5 1041.9,798.8 1043.1,798.0 1044.2,797.1 1045.1,796.1 1046.0,795.1 1046.8,794.0 1047.5,793.0 1048.0,791.9 1048.5,790.8 1048.8,789.7 1049.1,788.6 1049.2,787.4 1049.3,786.3 1049.2,785.1 1049.1,783.9 1048.8,782.8 1048.5,781.6 1048.0,780.5 1047.4,779.4 1046.7,778.2 1045.8,777.1 1044.9,775.9 1043.8,774.7 1042.7,773.4 1041.6,772.1 1040.4,770.8 1039.2,769.4 1037.8,768.0 1036.4,766.6 1034.9,765.2 1033.4,763.8 1031.9,762.3 1030.3,760.8 1028.7,759.3 1027.0,757.7 1025.2,756.2 1023.4,754.6 1021.6,753.0 1019.7,751.3 1017.9,749.6 1016.0,747.9 1014.1,746.0 1012.1,744.1 1010.2,742.2 1008.2,740.2 1006.2,738.2 1004.2,736.2 1002.2,734.2 1000.3,732.2 998.3,730.3 996.2,728.2 994.1,726.1 992.1,724.1 990.0,722.1 988.1,720.1 986.3,718.3 984.6,716.5 983.1,714.9 981.8,713.4 980.6,712.0 979.4,710.6 978.4,709.4 977.3,708.2 976.3,707.0 975.1,705.8 974.0,704.7 972.9,703.7 971.8,702.8 970.7,701.8 969.6,700.9 968.5,699.9 967.3,699.0 966.1,697.9 964.9,696.9 963.5,695.8 962.1,694.7 960.6,693.6 959.2,692.4 957.8,691.2 956.5,690.0 955.3,688.7 954.2,687.4 953.2,686.0 952.3,684.6 951.4,683.2 950.6,681.7 949.9,680.3 949.4,678.9 948.9,677.5 948.6,676.2 948.4,674.9 948.4,673.7 948.4,672.4 948.6,671.2 948.9,669.9 949.3,668.7 949.8,667.4 950.6,666.2 951.5,665.0 952.5,663.8 953.6,662.6 954.8,661.4 956.0,660.2 957.3,659.1 958.5,657.9 959.7,656.8 960.9,655.7 962.2,654.6 963.4,653.5 964.8,652.3 966.2,651.2 967.7,650.0 969.2,648.7 970.9,647.3 972.7,645.7 974.7,644.1 976.6,642.4 978.7,640.8 980.7,639.2 982.7,637.7 984.6,636.4 986.6,635.2 988.5,634.1 990.3,633.1 992.2,632.2 994.1,631.3 996.0,630.6 997.8,629.9 999.7,629.3 1001.5,628.9 1003.3,628.5 1005.2,628.2 1007.0,628.0 1008.7,627.9 1010.5,627.9 1012.2,628.0 1013.9,628.1 1015.6,628.4 1017.2,628.8 1018.7,629.3 1020.2,629.8 1021.7,630.4 1023.2,630.9 1024.7,631.5 1026.3,631.9 1028.1,632.4 1029.9,632.9 1031.8,633.5 1033.7,634.0 1035.7,634.5 1037.6,634.8 1039.4,635.0 1041.3,635.0 1043.1,634.8 1045.0,634.5 1046.9,634.1 1048.9,633.5 1050.8,632.9 1052.6,632.1 1054.4,631.4 1056.0,630.5 1057.6,629.7 1059.1,628.7 1060.5,627.7 1061.8,626.7 1063.1,625.5 1064.3,624.3 1065.3,623.1 1066.3,621.7 1067.2,620.3 1067.9,618.8 1068.6,617.2 1069.2,615.5 1069.7,613.7 1070.2,612.0 1070.5,610.3 1070.7,608.6 1070.8,606.9 1070.9,605.2 1070.8,603.5 1070.7,601.8 1070.4,600.2 1070.1,598.5 1069.7,596.9 1069.2,595.3 1068.5,593.8 1067.8,592.3 1066.9,590.8 1065.9,589.3 1064.8,587.8 1063.8,586.3 1062.7,584.8 1061.7,583.4 1060.7,582.0 1059.7,580.7 1058.7,579.4 1057.6,578.1 1056.6,576.8 1055.6,575.4 1054.7,574.0 1053.9,572.5 1053.3,571.0 1052.7,569.5 1052.1,567.9 1051.7,566.3 1051.4,564.7 1051.1,563.1 1050.9,561.4 1050.8,559.8 1050.8,558.3 1050.9,556.7 1051.1,555.2 1051.4,553.6 1051.7,552.1 1052.1,550.5 1052.6,548.8 1053.2,547.1 1053.8,545.3 1054.6,543.3 1055.5,541.4 1056.5,539.3 1057.4,537.3 1058.4,535.4 1059.3,533.5 1060.1,531.7 1060.8,530.0 1061.5,528.4 1062.2,526.9 1062.8,525.4 1063.5,523.9 1064.1,522.5 1064.8,521.0 1065.5,519.5 1066.3,518.0 1067.0,516.5 1067.8,515.1 1068.6,513.6 1069.4,512.2 1070.2,510.7 1071.0,509.2 1071.8,507.7 1072.7,506.0 1073.5,504.2 1074.4,502.4 1075.3,500.5 1076.2,498.6 1077.1,496.8 1078.1,495.1 1079.0,493.5 1079.9,492.0 1080.8,490.7 1081.7,489.4 1082.6,488.2 1083.5,487.0 1084.4,485.9 1085.3,484.9 1086.2,483.9 1087.1,483.0 1088.0,482.1 1088.8,481.3 1089.7,480.6 1090.6,479.9 1091.5,479.2 1092.4,478.5 1093.4,477.8 1094.6,477.1 1095.8,476.4 1097.1,475.7 1098.3,475.0 1099.6,474.3 1100.7,473.6 1101.7,472.9 1102.7,472.0 1103.5,471.1 1104.3,470.1 1105.0,469.1 1105.7,468.0 1106.3,466.9 1106.8,465.7 1107.3,464.5 1107.6,463.2 1107.9,461.9 1108.1,460.6 1108.2,459.3 1108.3,457.8 1108.3,456.3 1108.2,454.7 1108.1,453.0 1108.0,451.1 1107.8,449.0 1107.6,446.8 1107.3,444.4 1107.0,442.0 1106.7,439.4 1106.3,436.9 1105.9,434.4 1105.5,431.9 1105.1,429.5 1104.7,427.1 1104.2,424.6 1103.8,422.2 1103.3,419.7 1102.8,417.2 1102.2,414.7 1101.7,412.0 1101.2,409.3 1100.6,406.5 1100.0,403.5 1099.4,400.6 1098.8,397.6 1098.2,394.7 1097.7,391.9 1097.1,389.1 1096.6,386.5 1096.1,383.9 1095.6,381.4 1095.1,378.9 1094.6,376.5 1094.1,374.0 1093.7,371.6 1093.2,369.2 1092.8,366.8 1092.4,364.4 1092.0,361.9 1091.6,359.5 1091.2,357.2 1090.8,354.9 1090.5,352.8 1090.2,350.8 1090.0,348.9 1089.8,347.1 1089.6,345.5 1089.5,344.0 1089.3,342.5 1089.1,341.2 1088.9,339.9 1088.6,338.7 1088.3,337.6 1088.0,336.5 1087.6,335.6 1087.2,334.7 1086.8,333.9 1086.3,333.1 1085.7,332.3 1085.1,331.5 1084.4,330.7 1083.6,329.9 1082.7,329.1 1081.8,328.4 1080.8,327.7 1079.8,327.0 1078.8,326.3 1077.8,325.6 1076.7,325.0 1075.6,324.4 1074.3,323.9 1073.1,323.3 1071.8,322.8 1070.6,322.2 1069.5,321.6 1068.5,321.0 1067.7,320.4 1066.9,319.8 1066.3,319.2 1065.7,318.5 1065.1,317.8 1064.7,317.1 1064.3,316.3 1064.0,315.4 1063.8,314.5 1063.7,313.5 1063.7,312.5 1063.7,311.4 1063.9,310.3 1064.1,309.2 1064.4,308.1 1064.8,306.9 1065.3,305.6 1066.0,304.3 1066.8,303.1 1067.6,301.8 1068.5,300.4 1069.3,299.1 1070.0,297.8 1070.6,296.5 1071.2,295.2 1071.7,293.8 1072.2,292.3 1072.7,290.9 1073.1,289.4 1073.4,288.0 1073.7,286.6 1073.8,285.2 1073.8,283.8 1073.8,282.5 1073.6,281.0 1073.4,279.6 1073.1,278.2 1072.7,276.8 1072.3,275.5 1071.9,274.1 1071.4,272.8 1070.8,271.6 1070.1,270.4 1069.4,269.2 1068.6,267.9 1067.8,266.6 1067.0,265.3 1066.2,263.9 1065.4,262.5 1064.5,261.1 1063.7,259.6 1062.8,258.2 1062.0,256.6 1061.1,255.0 1060.3,253.3 1059.4,251.5 1058.6,249.5 1057.7,247.4 1056.8,245.2 1056.0,242.9 1055.1,240.6 1054.3,238.3 1053.6,236.2 1052.9,234.2 1052.2,232.4 1051.6,230.6 1050.9,228.9 1050.4,227.3 1049.8,225.6 1049.3,224.1 1048.8,222.5 1048.4,220.9 1048.1,219.3 1047.8,217.7 1047.5,216.2 1047.3,214.7 1047.2,213.2 1047.1,211.7 1047.0,210.3 1046.9,208.8 1046.9,207.4 1047.0,206.0 1047.2,204.6 1047.3,203.3 1047.5,202.0 1047.6,200.8 1047.7,199.7 1047.6,198.6 1047.5,197.6 1047.3,196.5 1047.0,195.5 1046.7,194.6 1046.4,193.6 1046.0,192.8 1045.5,191.9 1044.9,191.1 1044.3,190.3 1043.6,189.5 1042.8,188.8 1041.9,188.1 1041.0,187.4 1040.0,186.8 1039.0,186.2 1038.0,185.7 1036.9,185.2 1035.9,184.8 1034.7,184.5 1033.5,184.2 1032.3,184.0 1031.0,183.8 1029.6,183.7 1028.2,183.6 1026.7,183.6 1025.1,183.7 1023.5,183.9 1021.7,184.1 1019.9,184.4 1018.0,184.7 1015.9,185.0 1013.7,185.3 1011.3,185.6 1008.8,186.0 1006.2,186.4 1003.4,186.8 1000.6,187.3 997.7,187.7 994.7,188.2 991.7,188.7 988.5,189.2 985.2,189.7 981.8,190.3 978.3,190.8 974.9,191.4 971.5,192.0 968.2,192.5 965.2,193.1 962.4,193.6 959.7,194.2 957.1,194.8 954.6,195.4 952.2,196.0 949.9,196.5 947.5,197.1" fill="none" stroke="#c4c4c4" stroke-width="0.7"/>
 <polygon points="944.5,194.0 942.3,194.4 940.2,194.8 938.2,195.2 936.3,195.6 934.4,196.0 932.4,196.4 930.3,196.7 928.2,197.1 925.9,197.5 923.5,197.9 921.1,198.3 918.6,198.7 916.1,199.1 913.6,199.5 911.1,199.9 908.7,200.3 906.2,200.8 903.7,201.3 901.2,201.8 898.7,202.3 896.2,202.8 893.8,203.3 891.4,203.8 889.2,204.3 887.0,204.7 884.9,205.2 882.9,205.7 880.9,206.2 879.0,206.7 877.2,207.2 875.3,207.7 873.5,208.2 871.7,208.7 870.0,209.3 868.3,209.8 866.6,210.4 865.0,211.0 863.4,211.6 861.9,212.2 860.3,212.8 858.8,213.4 857.2,214.0 855.6,214.6 854.1,215.2 852.6,215.9 851.1,216.6 849.6,217.4 848.2,218.2 846.9,219.1 845.7,220.1 844.5,221.2 843.5,222.2 842.5,223.3 841.5,224.4 840.6,225.5 839.8,226.6 839.0,227.8 838.2,228.9 837.5,230.1 836.9,231.3 836.3,232.6 835.8,233.8 835.3,235.1 834.9,236.4 834.5,237.7 834.2,239.1 834.0,240.5 833.8,241.9 833.7,243.2 833.6,244.6 833.5,246.0 833.5,247.4 833.5,248.9 833.5,250.4 833.5,251.9 833.5,253.4 833.6,255.0 833.8,256.5 834.0,258.1 834.2,259.6 834.6,261.0 834.9,262.5 835.3,263.9 835.8,265.4 836.3,266.8 836.9,268.2 837.6,269.5 838.4,270.8 839.2,272.1 840.2,273.3 841.2,274.5 842.2,275.6 843.3,276.6 844.5,277.6 845.7,278.6 847.0,279.4 848.3,280.2 849.6,280.9 851.1,281.5 852.5,282.0 854.0,282.5 855.4,282.9 856.8,283.3 858.3,283.6 859.6,283.8 861.0,283.9 862.4,284.0 863.8,284.1 865.2,284.0 866.6,283.9 868.0,283.8 869.4,283.6 870.9,283.3 872.5,282.9 874.0,282.5 875.6,282.0 877.2,281.4 878.8,280.9 880.3,280.2 881.8,279.6 883.2,278.8 884.7,278.0 886.1,277.2 887.5,276.3 888.8,275.4 890.1,274.5 891.3,273.7 892.5,272.8 893.6,272.0 894.7,271.1 895.7,270.3 896.8,269.5 897.7,268.6 898.7,267.8 899.6,267.0 900.5,266.1 901.4,265.3 902.2,264.4 903.0,263.6 903.7,262.8 904.4,262.1 905.2,261.3 906.0,260.5 906.9,259.7 908.0,258.8 909.1,257.9 910.3,256.9 911.6,255.9 912.8,255.0 914.2,254.0 915.5,253.1 916.9,252.2 918.3,251.4 919.8,250.5 921.3,249.7 922.8,248.9 924.4,248.1 926.1,247.4 927.8,246.6 929.5,245.9 931.4,245.2 933.5,244.5 935.6,243.8 937.8,243.1 940.0,242.4 942.1,241.8 944.0,241.3 945.7,240.8 947.0,240.5 948.0,240.2 948.8,240.1 949.5,239.9 950.3,239.8 951.2,239.7 952.3,239.5 953.7,239.3 955.4,238.9 957.2,238.5 959.3,238.1 961.4,237.6 963.5,237.2 965.7,236.8 967.7,236.5 969.6,236.3 971.4,236.2 973.3,236.1 975.1,236.1 976.9,236.2 978.6,236.3 980.3,236.5 982.0,236.7 983.6,237.0 985.1,237.4 986.5,237.9 988.0,238.4 989.4,238.9 990.7,239.6 992.0,240.3 993.3,241.0 994.5,241.8 995.6,242.6 996.8,243.5 997.8,244.4 998.8,245.4 999.8,246.5 1000.8,247.6 1001.8,248.8 1002.7,250.0 1003.6,251.3 1004.6,252.6 1005.5,254.0 1006.3,255.5 1007.1,256.9 1007.8,258.3 1008.4,259.7 1008.9,261.1 1009.3,262.4 1009.6,263.7 1009.8,265.0 1009.9,266.4 1009.9,267.7 1009.9,269.0 1009.8,270.4 1009.6,271.7 1009.4,273.1 1009.0,274.5 1008.6,276.0 1008.1,277.4 1007.5,278.8 1006.9,280.1 1006.3,281.3 1005.6,282.3 1004.9,283.1 1004.1,283.9 1003.1,284.7 1002.1,285.3 1001.1,285.9 1000.0,286.5 999.0,286.9 998.0,287.3 997.0,287.7 996.1,287.9 995.3,288.0 994.4,288.1 993.5,288.1 992.5,288.1 991.5,288.0 990.3,287.9 989.1,287.7 987.8,287.5 986.4,287.1 984.9,286.8 983.4,286.3 981.9,285.9 980.3,285.5 978.8,285.1 977.4,284.7 976.0,284.3 974.7,284.0 973.3,283.6 971.8,283.2 970.3,282.8 968.7,282.5 966.9,282.1 965.1,281.8 963.0,281.5 960.9,281.2 958.7,280.9 956.5,280.7 954.4,280.5 952.4,280.3 950.5,280.3 948.8,280.3 947.3,280.5 945.8,280.6 944.4,280.9 943.1,281.2 941.9,281.5 940.7,281.8 939.5,282.2 938.3,282.6 937.2,283.1 936.1,283.5 935.1,284.1 934.0,284.6 932.9,285.3 931.9,286.0 930.7,286.8 929.5,287.7 928.2,288.8 926.9,290.0 925.6,291.2 924.3,292.4 923.1,293.5 922.1,294.5 921.1,295.3 920.4,295.8 919.8,296.3 919.3,296.6 918.9,296.8 918.4,297.1 917.9,297.4 917.2,297.7 916.3,298.2 915.2,298.7 914.0,299.2 912.7,299.8 911.3,300.4 909.8,301.1 908.2,301.9 906.8,302.7 905.4,303.6 904.1,304.6 902.9,305.6 901.7,306.7 900.6,307.8 899.5,308.9 898.4,310.1 897.4,311.4 896.3,312.7 895.3,314.0 894.3,315.4 893.3,316.9 892.3,318.4 891.3,319.9 890.4,321.5 889.5,323.1 888.7,324.6 887.9,326.2 887.1,327.9 886.3,329.6 885.5,331.3 884.8,333.0 884.1,334.7 883.6,336.4 883.2,338.0 882.8,339.6 882.6,341.2 882.5,342.7 882.4,344.2 882.5,345.7 882.6,347.1 882.9,348.5 883.2,349.9 883.6,351.2 884.2,352.6 884.9,354.0 885.6,355.3 886.5,356.5 887.5,357.6 888.6,358.6 889.8,359.4 891.2,359.8 892.6,360.0 894.0,360.0 895.3,359.8 896.7,359.4 898.0,358.9 899.3,358.3 900.6,357.7 902.0,356.8 903.4,355.8 904.8,354.6 906.2,353.4 907.6,352.2 908.9,351.0 910.2,350.0 911.5,349.0 912.8,348.1 914.1,347.3 915.4,346.4 916.7,345.6 917.9,344.8 919.2,344.1 920.4,343.5 921.6,343.0 922.6,342.6 923.6,342.3 924.4,342.0 925.3,341.8 926.3,341.7 927.4,341.5 928.8,341.3 930.4,341.1 932.4,340.8 934.6,340.5 937.0,340.2 939.5,339.9 942.1,339.7 944.7,339.4 947.2,339.1 949.5,338.9 951.6,338.6 953.7,338.4 955.8,338.1 957.8,337.9 959.7,337.7 961.5,337.5 963.3,337.4 965.0,337.4 966.7,337.4 968.3,337.5 969.9,337.6 971.4,337.7 972.9,337.9 974.4,338.2 975.8,338.5 977.3,338.9 978.8,339.4 980.2,339.9 981.7,340.5 983.2,341.1 984.6,341.8 986.0,342.6 987.3,343.4 988.5,344.2 989.7,345.1 990.8,346.1 991.9,347.2 993.0,348.3 994.0,349.5 995.1,350.7 996.3,351.9 997.4,353.2 998.6,354.3 999.9,355.5 1001.1,356.7 1002.3,357.8 1003.4,358.9 1004.5,360.0 1005.5,361.1 1006.3,362.1 1007.1,363.2 1007.8,364.2 1008.4,365.2 1008.9,366.2 1009.4,367.2 1009.8,368.3 1010.2,369.3 1010.5,370.3 1010.6,371.4 1010.7,372.5 1010.7,373.7 1010.6,374.9 1010.5,376.3 1010.5,377.7 1010.4,379.1 1010.4,380.5 1010.4,381.9 1010.4,383.3 1010.4,384.7 1010.4,386.2 1010.4,387.7 1010.6,389.2 1010.9,390.7 1011.4,392.2 1012.1,393.5 1013.0,394.7 1013.9,395.8 1014.9,396.8 1016.0,397.7 1017.0,398.5 1018.1,399.3 1019.2,400.1 1020.4,400.9 1021.6,401.6 1022.9,402.3 1024.2,402.9 1025.4,403.5 1026.5,404.1 1027.4,404.7 1028.2,405.3 1028.8,406.0 1029.5,406.6 1030.0,407.3 1030.5,408.0 1030.9,408.7 1031.3,409.5 1031.6,410.4 1031.8,411.4 1032.0,412.7 1032.1,414.2 1032.1,415.8 1032.0,417.6 1031.9,419.5 1031.8,421.4 1031.8,423.2 1031.8,424.8 1031.9,426.4 1031.9,427.9 1032.0,429.3 1032.0,430.8 1032.2,432.3 1032.5,433.8 1033.0,435.3 1033.8,436.8 1034.8,438.2 1036.1,439.5 1037.5,440.6 1038.9,441.5 1040.2,442.4 1041.4,443.2 1042.4,444.0 1043.2,444.8 1043.8,445.6 1044.3,446.4 1044.8,447.2 1045.2,448.1 1045.6,448.9 1045.9,449.8 1046.2,450.6 1046.5,451.4 1046.7,452.2 1046.8,453.0 1046.9,453.7 1046.9,454.5 1046.9,455.3 1046.9,456.2 1046.9,457.1 1046.9,458.1 1047.0,459.1 1047.0,460.1 1047.1,461.0 1047.2,461.9 1047.2,462.8 1047.2,463.7 1047.1,464.5 1046.9,465.5 1046.7,466.5 1046.5,467.5 1046.2,468.6 1045.8,469.7 1045.4,470.8 1044.9,471.8 1044.4,472.9 1043.8,474.0 1043.0,475.1 1042.2,476.3 1041.3,477.5 1040.3,478.7 1039.3,479.9 1038.2,480.9 1037.2,481.9 1036.2,482.6 1035.2,483.2 1034.1,483.8 1032.9,484.2 1031.7,484.6 1030.4,484.9 1029.1,485.2 1027.8,485.5 1026.6,485.8 1025.4,486.0 1024.3,486.2 1023.2,486.3 1022.1,486.5 1021.0,486.6 1019.8,486.7 1018.6,486.8 1017.3,486.9 1016.0,487.1 1014.7,487.2 1013.3,487.4 1011.9,487.5 1010.6,487.6 1009.3,487.8 1008.1,487.8 1007.0,487.9 1006.0,487.9 1005.1,488.0 1004.4,488.0 1003.7,488.0 1003.1,487.9 1002.4,487.9 1001.5,487.7 1000.5,487.5 999.2,487.3 997.8,487.0 996.3,486.7 994.7,486.3 993.1,485.8 991.6,485.4 990.3,484.8 989.0,484.3 987.8,483.6 986.7,482.9 985.6,482.2 984.6,481.4 983.6,480.5 982.7,479.7 981.9,478.7 981.2,477.7 980.6,476.7 980.0,475.5 979.5,474.2 979.0,472.9 978.7,471.5 978.3,470.0 978.1,468.6 977.9,467.2 977.8,465.7 977.8,464.2 977.8,462.7 978.0,461.1 978.1,459.4 978.3,457.7 978.5,456.0 978.7,454.4 978.8,452.7 979.0,451.1 979.3,449.5 979.5,447.8 979.7,446.1 979.9,444.4 980.0,442.7 980.1,441.0 980.1,439.3 980.2,437.6 980.2,435.8 980.2,434.1 980.1,432.3 979.9,430.5 979.7,428.8 979.3,427.1 978.9,425.4 978.4,423.7 977.8,422.1 977.2,420.5 976.4,418.9 975.6,417.4 974.8,415.9 973.9,414.5 972.9,413.1 971.9,411.9 970.8,410.6 969.6,409.4 968.4,408.3 967.1,407.2 965.8,406.1 964.4,405.1 962.9,404.0 961.3,403.0 959.6,401.9 957.9,400.9 956.1,399.9 954.3,398.9 952.4,398.1 950.6,397.4 948.7,396.7 946.8,396.1 944.9,395.7 942.9,395.2 941.0,394.9 939.0,394.6 937.1,394.4 935.1,394.3 933.2,394.2 931.2,394.3 929.2,394.3 927.2,394.5 925.3,394.7 923.4,395.0 921.5,395.4 919.7,395.8 917.9,396.3 916.2,396.8 914.6,397.4 913.0,398.1 911.4,398.8 909.9,399.6 908.5,400.4 907.1,401.3 905.8,402.2 904.5,403.2 903.3,404.2 902.1,405.2 901.0,406.4 899.9,407.6 899.0,408.9 898.2,410.3 897.5,411.8 896.9,413.3 896.4,414.8 896.1,416.5 895.8,418.1 895.7,419.9 895.6,421.6 895.7,423.4 895.9,425.3 896.3,427.2 896.8,429.1 897.3,431.1 898.0,433.1 898.7,435.1 899.5,437.0 900.3,439.0 901.3,440.9 902.3,442.8 903.4,444.6 904.6,446.5 905.8,448.3 907.0,450.2 908.2,452.0 909.4,453.9 910.6,455.9 911.9,457.9 913.2,459.9 914.6,462.0 915.9,464.0 917.2,466.0 918.4,468.1 919.7,470.1 920.8,472.1 922.0,474.1 923.1,476.1 924.2,478.2 925.3,480.2 926.3,482.2 927.4,484.2 928.4,486.1 929.3,488.1 930.2,490.0 931.1,491.9 932.0,493.8 932.9,495.7 933.7,497.6 934.6,499.4 935.5,501.1 936.3,502.7 937.1,504.3 937.9,505.8 938.6,507.2 939.5,508.6 940.3,510.0 941.2,511.5 942.3,512.9 943.4,514.5 944.5,516.0 945.8,517.5 947.0,519.1 948.4,520.6 949.7,522.1 951.1,523.5 952.5,524.9 954.0,526.1 955.5,527.3 957.1,528.4 958.7,529.4 960.2,530.4 961.6,531.4 962.9,532.3 964.1,533.3 965.2,534.2 966.3,535.1 967.2,536.0 968.2,537.0 969.1,537.9 970.1,538.9 971.1,540.0 972.1,541.2 973.2,542.4 974.3,543.8 975.5,545.2 976.6,546.7 977.9,548.3 979.2,549.8 980.6,551.4 982.1,552.8 983.7,554.2 985.5,555.6 987.2,556.9 989.1,558.2 990.8,559.4 992.5,560.6 994.1,561.7 995.5,562.9 996.8,563.9 998.0,564.9 999.2,565.9 1000.2,566.7 1001.1,567.6 1001.9,568.4 1002.5,569.2 1002.9,570.1 1003.2,571.1 1003.5,572.1 1003.6,573.3 1003.7,574.5 1003.6,575.8 1003.4,577.2 1003.2,578.6 1002.8,580.0 1002.3,581.5 1001.8,583.0 1001.1,584.6 1000.3,586.2 999.4,587.8 998.4,589.4 997.3,591.0 996.1,592.6 994.7,594.1 993.2,595.6 991.5,597.2 989.7,598.7 987.8,600.3 985.7,601.8 983.7,603.4 981.5,605.0 979.3,606.6 976.9,608.2 974.4,609.9 971.9,611.6 969.3,613.2 966.7,614.8 964.3,616.4 961.9,617.9 959.6,619.4 957.3,620.8 955.0,622.3 952.9,623.7 950.8,624.9 948.8,626.0 946.9,626.9 945.2,627.6 943.5,628.2 941.8,628.5 940.3,628.8 938.8,628.9 937.4,628.8 936.1,628.7 934.9,628.4 934.0,628.1 933.2,627.7 932.4,627.1 931.7,626.5 931.1,625.7 930.5,624.8 930.0,623.8 929.6,622.7 929.3,621.5 929.0,620.2 929.0,618.6 929.1,616.8 929.3,614.8 929.5,612.7 929.6,610.6 929.6,608.6 929.5,606.7 929.2,605.1 928.9,603.5 928.5,602.0 928.0,600.6 927.4,599.2 926.7,597.9 925.8,596.6 924.7,595.3 923.4,594.2 921.9,593.1 920.3,592.2 918.7,591.3 917.1,590.5 915.5,589.8 913.9,589.0 912.5,588.3 911.1,587.5 909.6,586.9 908.2,586.3 906.9,585.7 905.6,585.1 904.5,584.5 903.6,583.9 902.7,583.2 902.0,582.4 901.3,581.4 900.6,580.4 900.0,579.3 899.4,578.0 898.9,576.8 898.4,575.5 897.9,574.2 897.5,572.9 897.1,571.5 896.8,570.0 896.6,568.4 896.3,566.8 896.1,565.3 895.8,563.7 895.4,562.4 895.1,561.2 894.7,560.1 894.4,559.1 894.0,558.1 893.6,557.0 893.0,556.0 892.3,554.9 891.4,553.9 890.3,552.7 889.2,551.6 887.9,550.5 886.6,549.3 885.1,548.2 883.6,547.1 882.0,546.0 880.4,545.0 878.6,543.9 876.7,542.9 874.7,541.9 872.7,541.0 870.7,540.1 868.9,539.2 867.1,538.3 865.6,537.5 864.2,536.7 863.0,536.1 861.9,535.4 860.9,534.8 860.0,534.2 859.1,533.6 858.3,532.9 857.4,532.0 856.4,531.1 855.5,530.0 854.6,528.8 853.7,527.6 852.8,526.3 851.9,525.0 851.1,523.6 850.4,522.3 849.8,521.0 849.2,519.8 848.7,518.4 848.2,517.1 847.7,515.7 847.2,514.2 846.7,512.6 846.2,511.0 845.6,509.4 845.1,507.7 844.6,505.9 844.1,504.1 843.6,502.2 843.0,500.3 842.4,498.3 841.8,496.3 841.1,494.3 840.4,492.2 839.7,490.1 838.9,487.9 838.2,485.7 837.4,483.6 836.7,481.3 836.0,479.1 835.3,476.9 834.6,474.6 833.9,472.2 833.2,469.9 832.5,467.5 831.8,465.1 831.1,462.8 830.4,460.6 829.6,458.4 828.9,456.3 828.1,454.3 827.3,452.3 826.5,450.3 825.8,448.3 825.0,446.4 824.2,444.5 823.4,442.5 822.6,440.6 821.8,438.7 821.0,436.8 820.2,434.9 819.4,433.1 818.7,431.4 818.0,429.7 817.4,428.0 816.7,426.4 816.1,424.9 815.6,423.4 815.0,421.9 814.6,420.5 814.2,419.1 813.9,417.7 813.6,416.3 813.5,414.8 813.4,413.3 813.3,411.8 813.3,410.3 813.3,408.8 813.3,407.3 813.2,405.8 813.1,404.5 813.1,403.2 813.1,401.9 813.1,400.6 813.1,399.3 813.0,398.0 812.8,396.6 812.5,395.4 812.1,394.1 811.6,392.9 811.1,391.7 810.5,390.6 809.8,389.5 809.1,388.5 808.3,387.6 807.5,386.8 806.6,386.0 805.7,385.4 804.7,384.8 803.7,384.4 802.7,384.1 801.7,383.8 800.6,383.7 799.6,383.6 798.6,383.7 797.6,383.8 796.6,384.1 795.6,384.4 794.6,384.9 793.7,385.4 792.8,386.0 791.9,386.7 791.0,387.5 790.2,388.3 789.4,389.3 788.6,390.3 787.8,391.3 787.1,392.4 786.4,393.6 785.7,394.8 785.0,396.1 784.4,397.5 783.8,398.8 783.3,400.3 782.8,401.8 782.2,403.3 781.7,404.8 781.2,406.3 780.7,407.9 780.2,409.6 779.7,411.3 779.2,413.1 778.7,414.9 778.3,416.6 777.8,418.4 777.5,420.2 777.1,421.9 776.8,423.7 776.4,425.4 776.2,427.2 775.9,429.0 775.7,430.8 775.6,432.5 775.5,434.2 775.5,435.9 775.5,437.6 775.6,439.2 775.8,440.9 776.0,442.5 776.2,444.1 776.5,445.6 776.9,447.2 777.3,448.7 777.7,450.3 778.3,451.8 778.8,453.2 779.4,454.7 780.0,456.1 780.7,457.5 781.4,458.9 782.1,460.2 782.9,461.5 783.8,462.8 784.6,464.0 785.4,465.1 786.2,466.3 786.9,467.5 787.6,468.7 788.2,470.0 788.8,471.5 789.3,473.0 789.9,474.6 790.5,476.2 791.1,477.9 791.7,479.5 792.5,481.0 793.3,482.5 794.1,483.8 794.9,485.0 795.8,486.1 796.6,487.2 797.4,488.4 798.2,489.6 799.0,491.0 799.9,492.5 800.8,494.2 801.7,496.1 802.7,497.9 803.6,499.9 804.5,501.8 805.4,503.7 806.2,505.5 807.0,507.2 807.8,508.8 808.5,510.4 809.2,511.9 809.8,513.4 810.4,514.9 810.9,516.4 811.2,518.1 811.5,519.8 811.7,521.7 811.7,523.7 811.7,525.7 811.7,527.8 811.7,529.9 811.8,532.0 811.9,534.0 812.1,535.8 812.3,537.6 812.4,539.4 812.7,541.1 812.9,542.8 813.3,544.5 813.7,546.2 814.2,547.9 814.9,549.6 815.6,551.3 816.4,552.9 817.3,554.5 818.2,556.0 819.2,557.5 820.2,558.9 821.2,560.3 822.3,561.7 823.5,562.9 824.6,564.0 825.8,565.1 827.0,566.2 828.1,567.2 829.2,568.2 830.3,569.3 831.4,570.5 832.5,571.7 833.6,573.0 834.7,574.3 835.8,575.6 836.9,576.9 837.9,578.2 838.9,579.4 839.9,580.7 840.8,581.9 841.8,583.2 842.6,584.4 843.5,585.6 844.4,586.9 845.2,588.2 846.1,589.5 846.9,590.9 847.7,592.3 848.5,593.7 849.3,595.2 850.1,596.7 851.0,598.3 851.9,599.8 852.8,601.3 853.7,602.8 854.6,604.1 855.5,605.3 856.4,606.6 857.4,607.9 858.4,609.3 859.6,610.9 860.8,612.8 862.2,615.0 863.8,617.5 865.5,620.2 867.3,623.0 869.2,625.9 871.0,628.8 872.9,631.6 874.6,634.2 876.4,636.7 878.3,639.2 880.1,641.6 881.9,644.0 883.7,646.3 885.4,648.5 887.0,650.6 888.5,652.7 889.9,654.6 891.3,656.4 892.6,658.2 893.8,659.8 894.8,661.3 895.8,662.8 896.6,664.3 897.3,665.8 897.8,667.4 898.2,668.9 898.5,670.5 898.7,672.1 898.8,673.8 898.8,675.4 898.8,677.0 898.7,678.5 898.6,679.9 898.3,681.3 898.0,682.7 897.5,684.1 897.1,685.5 896.6,687.1 896.1,688.6 895.7,690.3 895.3,692.0 894.8,693.8 894.4,695.6 893.9,697.5 893.5,699.3 893.1,701.1 892.7,702.8 892.5,704.4 892.4,705.8 892.3,707.0 892.3,708.2 892.4,709.2 892.5,710.2 892.6,711.2 892.8,712.3 893.0,713.4 893.2,714.7 893.4,716.0 893.7,717.3 894.0,718.8 894.3,720.3 894.8,721.9 895.5,723.6 896.3,725.3 897.2,727.1 898.3,728.9 899.5,730.8 900.7,732.7 902.1,734.6 903.6,736.5 905.1,738.4 906.6,740.2 908.3,741.9 910.0,743.6 911.7,745.3 913.6,746.9 915.4,748.5 917.3,750.1 919.3,751.6 921.2,753.2 923.2,754.9 925.3,756.6 927.5,758.3 929.7,760.0 931.9,761.6 934.1,763.2 936.4,764.8 938.6,766.2 940.8,767.6 943.1,768.8 945.4,770.0 947.7,771.1 949.9,772.1 952.1,773.1 954.1,774.0 955.9,775.0 957.6,775.8 959.2,776.6 960.7,777.2 962.1,777.9 963.4,778.5 964.6,779.2 965.9,779.8 967.2,780.6 968.5,781.3 969.8,782.1 971.1,782.9 972.3,783.7 973.5,784.5 974.5,785.3 975.5,786.2 976.3,787.1 977.1,788.1 977.7,789.3 978.3,790.7 978.9,792.2 979.5,793.7 980.2,795.3 981.0,796.9 981.9,798.3 982.9,799.6 983.9,800.8 984.9,801.9 986.0,802.9 987.2,803.9 988.6,804.8 990.1,805.6 991.7,806.3 993.5,806.9 995.4,807.4 997.3,807.8 999.4,808.2 1001.6,808.4 1003.8,808.6 1006.0,808.7 1008.3,808.7 1010.7,808.6 1013.3,808.5 1015.9,808.3 1018.6,808.0 1021.3,807.6 1023.9,807.3 1026.4,806.9 1028.6,806.5 1030.8,806.1 1032.9,805.6 1034.9,805.2 1036.8,804.7 1038.7,804.2 1040.5,803.5 1042.2,802.8 1043.8,801.9 1045.3,801.0 1046.6,799.9 1047.8,798.7 1048.9,797.4 1049.8,796.1 1050.7,794.8 1051.4,793.4 1051.9,792.1 1052.4,790.7 1052.7,789.2 1052.9,787.8 1053.0,786.3 1052.9,784.8 1052.7,783.3 1052.4,781.8 1051.9,780.3 1051.3,778.9 1050.6,777.5 1049.7,776.1 1048.8,774.8 1047.7,773.5 1046.7,772.3 1045.5,771.0 1044.4,769.6 1043.1,768.3 1041.8,766.9 1040.4,765.4 1039.0,764.0 1037.5,762.6 1036.0,761.1 1034.4,759.6 1032.8,758.1 1031.1,756.5 1029.4,755.0 1027.7,753.4 1025.9,751.8 1024.1,750.2 1022.2,748.6 1020.4,746.9 1018.5,745.2 1016.6,743.4 1014.7,741.5 1012.8,739.6 1010.8,737.6 1008.8,735.6 1006.8,733.6 1004.8,731.6 1002.9,729.6 1000.9,727.6 998.8,725.6 996.7,723.5 994.7,721.5 992.7,719.5 990.8,717.5 989.0,715.7 987.3,714.0 985.9,712.4 984.6,711.0 983.4,709.6 982.2,708.2 981.2,707.0 980.1,705.7 979.0,704.5 977.8,703.2 976.6,702.1 975.4,701.0 974.3,700.0 973.2,699.0 972.0,698.1 970.9,697.1 969.7,696.1 968.5,695.1 967.2,694.0 965.8,692.9 964.3,691.8 962.9,690.7 961.6,689.6 960.3,688.5 959.1,687.4 958.1,686.3 957.1,685.1 956.2,683.9 955.4,682.6 954.6,681.3 953.9,680.0 953.3,678.8 952.9,677.6 952.5,676.5 952.3,675.5 952.1,674.5 952.1,673.6 952.1,672.7 952.2,671.8 952.4,671.0 952.7,670.1 953.1,669.2 953.7,668.2 954.4,667.2 955.3,666.2 956.3,665.1 957.4,664.0 958.6,662.9 959.8,661.8 961.0,660.6 962.2,659.5 963.4,658.4 964.6,657.4 965.8,656.3 967.2,655.2 968.5,654.0 970.0,652.8 971.6,651.5 973.3,650.1 975.1,648.5 977.0,646.9 979.0,645.3 981.0,643.7 982.9,642.1 984.8,640.7 986.7,639.5 988.5,638.4 990.3,637.4 992.0,636.4 993.8,635.5 995.6,634.7 997.3,634.0 999.0,633.4 1000.7,632.9 1002.3,632.5 1004.0,632.1 1005.6,631.9 1007.3,631.7 1008.9,631.6 1010.5,631.6 1012.0,631.7 1013.5,631.8 1014.9,632.0 1016.2,632.3 1017.6,632.8 1018.9,633.3 1020.4,633.8 1021.9,634.4 1023.6,635.0 1025.3,635.5 1027.1,636.0 1028.9,636.5 1030.9,637.1 1032.9,637.6 1034.9,638.1 1037.1,638.5 1039.2,638.7 1041.4,638.7 1043.5,638.5 1045.7,638.2 1047.9,637.7 1050.0,637.1 1052.1,636.3 1054.1,635.6 1056.0,634.7 1057.8,633.8 1059.5,632.8 1061.1,631.8 1062.7,630.7 1064.2,629.5 1065.7,628.2 1067.0,626.8 1068.3,625.3 1069.4,623.8 1070.4,622.1 1071.3,620.4 1072.1,618.5 1072.7,616.6 1073.3,614.7 1073.8,612.8 1074.1,610.8 1074.4,609.0 1074.5,607.1 1074.6,605.2 1074.5,603.3 1074.3,601.4 1074.1,599.5 1073.7,597.7 1073.2,595.8 1072.6,594.0 1071.9,592.2 1071.0,590.5 1070.0,588.8 1069.0,587.2 1067.9,585.7 1066.8,584.2 1065.7,582.7 1064.7,581.2 1063.7,579.8 1062.6,578.4 1061.6,577.1 1060.5,575.8 1059.6,574.6 1058.7,573.4 1057.9,572.1 1057.2,570.9 1056.7,569.6 1056.2,568.2 1055.7,566.8 1055.3,565.4 1055.0,564.0 1054.7,562.5 1054.6,561.1 1054.5,559.7 1054.5,558.4 1054.6,557.0 1054.7,555.7 1055.0,554.3 1055.3,552.9 1055.7,551.5 1056.1,549.9 1056.7,548.3 1057.3,546.6 1058.0,544.8 1058.9,542.9 1059.8,540.9 1060.8,538.9 1061.7,537.0 1062.6,535.0 1063.5,533.2 1064.2,531.5 1064.9,529.9 1065.6,528.4 1066.2,526.9 1066.9,525.4 1067.5,524.0 1068.2,522.5 1068.8,521.1 1069.6,519.7 1070.3,518.2 1071.1,516.8 1071.8,515.4 1072.6,514.0 1073.4,512.5 1074.3,511.0 1075.1,509.3 1076.0,507.6 1076.9,505.8 1077.8,504.0 1078.6,502.1 1079.5,500.3 1080.4,498.5 1081.3,496.9 1082.1,495.4 1083.0,494.0 1083.8,492.7 1084.7,491.5 1085.5,490.4 1086.4,489.3 1087.2,488.3 1088.1,487.3 1088.9,486.4 1089.7,485.6 1090.5,484.8 1091.3,484.1 1092.0,483.5 1092.8,482.8 1093.7,482.2 1094.6,481.5 1095.5,480.9 1096.5,480.2 1097.6,479.6 1098.8,478.9 1100.1,478.3 1101.5,477.5 1102.8,476.7 1104.1,475.7 1105.2,474.7 1106.3,473.6 1107.2,472.4 1108.1,471.1 1108.9,469.8 1109.6,468.5 1110.2,467.1 1110.8,465.6 1111.2,464.1 1111.6,462.6 1111.8,461.1 1111.9,459.5 1112.0,457.9 1112.0,456.3 1111.9,454.6 1111.8,452.8 1111.7,450.8 1111.5,448.7 1111.3,446.4 1111.0,444.0 1110.7,441.5 1110.3,438.9 1110.0,436.4 1109.6,433.8 1109.2,431.3 1108.8,428.8 1108.3,426.4 1107.9,423.9 1107.4,421.5 1106.9,419.0 1106.4,416.5 1105.9,413.9 1105.4,411.3 1104.8,408.6 1104.2,405.7 1103.7,402.8 1103.1,399.9 1102.5,396.9 1101.9,394.0 1101.3,391.1 1100.8,388.4 1100.2,385.8 1099.7,383.2 1099.2,380.7 1098.7,378.2 1098.2,375.7 1097.8,373.3 1097.3,370.9 1096.9,368.6 1096.4,366.2 1096.0,363.7 1095.6,361.3 1095.2,358.9 1094.9,356.6 1094.5,354.3 1094.2,352.2 1093.9,350.3 1093.6,348.4 1093.4,346.7 1093.3,345.1 1093.1,343.6 1093.0,342.1 1092.8,340.6 1092.5,339.2 1092.2,337.8 1091.8,336.5 1091.4,335.3 1091.0,334.1 1090.5,333.1 1090.0,332.0 1089.4,331.0 1088.7,330.1 1087.9,329.1 1087.1,328.1 1086.1,327.2 1085.1,326.3 1084.1,325.5 1083.0,324.7 1081.9,323.9 1080.8,323.2 1079.7,322.5 1078.5,321.8 1077.2,321.1 1075.9,320.5 1074.6,319.9 1073.4,319.4 1072.3,318.9 1071.4,318.4 1070.6,317.9 1069.9,317.4 1069.4,317.0 1068.9,316.5 1068.5,316.1 1068.2,315.8 1068.0,315.4 1067.8,315.0 1067.6,314.5 1067.5,313.9 1067.4,313.2 1067.4,312.5 1067.4,311.7 1067.5,310.9 1067.7,310.0 1067.9,309.1 1068.2,308.2 1068.7,307.2 1069.2,306.2 1069.9,305.0 1070.8,303.7 1071.6,302.4 1072.5,301.0 1073.3,299.5 1074.0,298.0 1074.6,296.5 1075.2,295.0 1075.7,293.5 1076.2,292.0 1076.7,290.4 1077.1,288.7 1077.3,287.1 1077.5,285.5 1077.5,283.8 1077.5,282.2 1077.3,280.6 1077.0,279.0 1076.7,277.4 1076.3,275.9 1075.8,274.3 1075.3,272.8 1074.8,271.4 1074.1,269.9 1073.3,268.6 1072.5,267.3 1071.7,266.0 1070.9,264.7 1070.1,263.4 1069.4,262.0 1068.6,260.6 1067.7,259.2 1066.9,257.8 1066.1,256.3 1065.2,254.9 1064.4,253.3 1063.6,251.7 1062.8,250.0 1062.0,248.1 1061.1,246.0 1060.3,243.8 1059.5,241.6 1058.6,239.3 1057.8,237.1 1057.1,234.9 1056.4,233.0 1055.7,231.1 1055.0,229.3 1054.4,227.7 1053.9,226.0 1053.3,224.5 1052.8,223.0 1052.4,221.5 1052.0,220.0 1051.7,218.5 1051.4,217.1 1051.2,215.6 1051.0,214.2 1050.9,212.8 1050.7,211.4 1050.7,210.1 1050.6,208.8 1050.6,207.5 1050.7,206.3 1050.8,205.0 1051.0,203.7 1051.2,202.4 1051.3,201.0 1051.4,199.6 1051.3,198.3 1051.1,197.0 1050.9,195.7 1050.6,194.5 1050.2,193.3 1049.8,192.2 1049.2,191.1 1048.6,190.0 1047.9,188.9 1047.1,187.9 1046.2,186.9 1045.2,186.0 1044.2,185.2 1043.1,184.4 1042.0,183.6 1040.8,182.9 1039.5,182.3 1038.3,181.8 1037.0,181.3 1035.7,180.9 1034.3,180.6 1032.9,180.3 1031.4,180.1 1029.9,180.0 1028.2,179.9 1026.5,179.9 1024.8,180.0 1023.1,180.2 1021.3,180.4 1019.4,180.7 1017.4,181.0 1015.4,181.3 1013.1,181.6 1010.8,182.0 1008.2,182.3 1005.6,182.7 1002.9,183.2 1000.0,183.6 997.1,184.1 994.1,184.5 991.1,185.0 988.0,185.5 984.6,186.1 981.2,186.6 977.7,187.2 974.2,187.7 970.8,188.3 967.6,188.9 964.5,189.4 961.7,190.0 958.9,190.6 956.3,191.2 953.8,191.8 951.4,192.4 949.0,192.9 946.7,193.5" fill="none" stroke="#106a93" stroke-width="1.35"/>
 <polygon points="945.5,198.8 943.3,199.3 941.2,199.7 939.2,200.1 937.2,200.5 935.3,200.9 933.3,201.3 931.2,201.7 929.0,202.1 926.7,202.5 924.3,202.9 921.9,203.2 919.4,203.6 916.9,204.0 914.4,204.4 912.0,204.8 909.5,205.3 907.1,205.7 904.6,206.2 902.1,206.7 899.6,207.2 897.2,207.7 894.8,208.2 892.5,208.7 890.2,209.1 888.1,209.6 886.1,210.1 884.1,210.6 882.2,211.0 880.3,211.5 878.5,212.0 876.7,212.5 874.9,213.0 873.2,213.5 871.5,214.0 869.9,214.6 868.3,215.1 866.7,215.7 865.2,216.3 863.6,216.8 862.1,217.4 860.6,218.0 859.0,218.6 857.5,219.2 856.1,219.8 854.7,220.4 853.3,221.0 852.1,221.7 851.0,222.4 849.9,223.1 848.9,224.0 848.0,224.8 847.0,225.7 846.2,226.6 845.3,227.6 844.6,228.6 843.8,229.6 843.1,230.5 842.5,231.5 841.9,232.5 841.4,233.6 840.9,234.6 840.4,235.6 840.1,236.7 839.7,237.8 839.4,238.9 839.2,240.0 839.0,241.2 838.8,242.4 838.7,243.7 838.6,244.9 838.5,246.2 838.5,247.6 838.5,248.9 838.5,250.3 838.5,251.8 838.5,253.2 838.6,254.6 838.7,256.0 838.9,257.3 839.2,258.6 839.4,259.9 839.8,261.2 840.1,262.5 840.5,263.7 841.0,264.9 841.5,266.0 842.0,267.1 842.6,268.2 843.3,269.2 844.1,270.2 844.9,271.1 845.8,272.0 846.7,272.9 847.6,273.7 848.6,274.5 849.6,275.2 850.7,275.8 851.8,276.4 853.0,276.9 854.2,277.3 855.4,277.7 856.7,278.1 857.9,278.4 859.1,278.6 860.3,278.8 861.5,279.0 862.6,279.0 863.8,279.1 864.9,279.0 866.1,279.0 867.3,278.8 868.6,278.6 869.9,278.4 871.2,278.1 872.6,277.7 874.1,277.2 875.5,276.7 876.9,276.2 878.3,275.6 879.6,275.0 880.9,274.4 882.2,273.7 883.5,272.9 884.7,272.1 886.0,271.3 887.2,270.4 888.4,269.6 889.5,268.8 890.6,268.0 891.6,267.2 892.6,266.4 893.5,265.6 894.4,264.9 895.3,264.1 896.2,263.3 897.1,262.5 897.9,261.7 898.6,261.0 899.3,260.2 900.1,259.4 900.8,258.6 901.7,257.7 902.6,256.8 903.7,255.9 904.8,255.0 906.0,254.0 907.2,253.0 908.5,252.0 909.9,250.9 911.3,249.9 912.8,248.9 914.3,248.0 915.8,247.1 917.4,246.2 919.0,245.3 920.6,244.5 922.3,243.6 924.0,242.8 925.8,242.0 927.7,241.3 929.7,240.5 931.8,239.8 934.1,239.0 936.4,238.3 938.6,237.6 940.7,237.0 942.6,236.5 944.3,236.0 945.7,235.6 946.9,235.3 947.8,235.1 948.7,235.0 949.5,234.9 950.4,234.7 951.4,234.6 952.7,234.3 954.3,234.0 956.2,233.6 958.2,233.2 960.4,232.7 962.6,232.3 964.9,231.8 967.1,231.5 969.2,231.3 971.2,231.2 973.2,231.1 975.2,231.1 977.2,231.2 979.1,231.3 981.0,231.5 982.8,231.8 984.6,232.2 986.4,232.6 988.1,233.1 989.8,233.7 991.4,234.4 992.9,235.1 994.4,235.9 995.9,236.7 997.3,237.6 998.7,238.6 1000.0,239.7 1001.2,240.8 1002.4,241.9 1003.5,243.1 1004.6,244.4 1005.7,245.7 1006.7,247.0 1007.7,248.4 1008.7,249.9 1009.7,251.4 1010.7,253.0 1011.6,254.6 1012.4,256.2 1013.1,257.9 1013.7,259.5 1014.1,261.2 1014.5,262.8 1014.7,264.4 1014.9,266.0 1014.9,267.7 1014.9,269.3 1014.8,270.9 1014.6,272.5 1014.3,274.1 1013.9,275.8 1013.4,277.5 1012.8,279.2 1012.1,280.8 1011.4,282.4 1010.5,283.9 1009.6,285.3 1008.5,286.6 1007.4,287.7 1006.1,288.7 1004.8,289.5 1003.5,290.3 1002.2,291.0 1000.9,291.6 999.6,292.1 998.4,292.5 997.2,292.8 996.0,293.0 994.7,293.1 993.5,293.1 992.3,293.1 991.0,293.0 989.7,292.9 988.2,292.7 986.7,292.4 985.2,292.0 983.6,291.6 982.1,291.2 980.5,290.7 979.0,290.3 977.6,289.9 976.1,289.5 974.7,289.2 973.3,288.8 972.0,288.4 970.6,288.0 969.2,287.7 967.7,287.4 966.1,287.1 964.3,286.8 962.3,286.5 960.2,286.2 958.1,285.9 956.0,285.7 954.0,285.5 952.1,285.3 950.5,285.3 949.0,285.3 947.7,285.4 946.5,285.6 945.4,285.8 944.3,286.0 943.2,286.3 942.2,286.6 941.1,287.0 940.1,287.3 939.1,287.7 938.2,288.1 937.4,288.5 936.5,289.0 935.6,289.5 934.7,290.1 933.7,290.8 932.6,291.6 931.5,292.6 930.2,293.7 929.0,294.9 927.7,296.1 926.5,297.2 925.3,298.3 924.3,299.1 923.4,299.8 922.6,300.4 922.0,300.8 921.4,301.2 920.8,301.5 920.1,301.8 919.4,302.2 918.5,302.6 917.4,303.2 916.1,303.8 914.7,304.4 913.3,305.0 912.0,305.6 910.6,306.3 909.4,307.0 908.2,307.8 907.2,308.6 906.1,309.4 905.1,310.3 904.1,311.3 903.2,312.3 902.2,313.4 901.2,314.6 900.3,315.7 899.3,317.0 898.4,318.3 897.4,319.7 896.5,321.1 895.6,322.5 894.7,324.0 893.9,325.5 893.1,327.0 892.3,328.5 891.6,330.1 890.8,331.6 890.1,333.2 889.4,334.8 888.9,336.3 888.4,337.8 888.0,339.2 887.8,340.5 887.6,341.8 887.5,343.0 887.4,344.2 887.5,345.4 887.6,346.5 887.8,347.5 888.0,348.5 888.3,349.5 888.8,350.6 889.3,351.6 889.8,352.6 890.4,353.4 891.0,354.1 891.5,354.6 892.0,354.8 892.4,355.0 892.9,355.0 893.5,355.0 894.3,354.9 895.2,354.6 896.1,354.3 897.1,353.8 898.2,353.3 899.2,352.7 900.4,351.8 901.6,350.8 902.9,349.7 904.3,348.4 905.7,347.2 907.1,346.0 908.5,345.0 909.9,344.0 911.3,343.1 912.7,342.2 914.1,341.3 915.5,340.5 916.9,339.7 918.3,339.0 919.6,338.4 920.9,337.9 922.1,337.5 923.2,337.2 924.3,336.9 925.5,336.7 926.7,336.6 928.1,336.4 929.8,336.1 931.7,335.8 934.0,335.6 936.4,335.3 939.0,335.0 941.6,334.7 944.2,334.4 946.6,334.2 948.9,333.9 951.1,333.7 953.2,333.4 955.2,333.2 957.2,332.9 959.2,332.7 961.2,332.5 963.1,332.4 965.0,332.4 966.8,332.4 968.6,332.5 970.3,332.6 972.0,332.8 973.7,333.0 975.4,333.3 977.0,333.7 978.7,334.1 980.4,334.6 982.0,335.2 983.7,335.9 985.3,336.6 986.9,337.4 988.5,338.3 990.0,339.2 991.5,340.2 992.9,341.2 994.2,342.4 995.4,343.6 996.6,344.9 997.7,346.1 998.8,347.3 999.9,348.5 1001.0,349.6 1002.1,350.8 1003.3,351.9 1004.5,353.0 1005.8,354.2 1007.0,355.4 1008.2,356.6 1009.3,357.8 1010.3,359.1 1011.2,360.3 1012.0,361.5 1012.7,362.7 1013.4,364.0 1014.0,365.2 1014.5,366.5 1015.0,367.9 1015.3,369.3 1015.6,370.8 1015.7,372.3 1015.7,373.7 1015.6,375.2 1015.5,376.6 1015.4,377.9 1015.4,379.2 1015.4,380.5 1015.4,381.9 1015.4,383.3 1015.4,384.7 1015.4,386.0 1015.4,387.3 1015.5,388.4 1015.7,389.4 1016.0,390.2 1016.4,391.0 1016.9,391.7 1017.5,392.4 1018.3,393.1 1019.2,393.8 1020.1,394.5 1021.1,395.2 1022.0,395.9 1023.0,396.6 1024.1,397.2 1025.2,397.8 1026.5,398.4 1027.8,399.1 1029.1,399.8 1030.3,400.6 1031.4,401.5 1032.4,402.4 1033.3,403.4 1034.0,404.3 1034.7,405.4 1035.4,406.5 1035.9,407.7 1036.4,409.1 1036.8,410.6 1037.0,412.2 1037.1,414.0 1037.1,415.9 1037.0,417.8 1036.9,419.7 1036.8,421.5 1036.8,423.2 1036.8,424.8 1036.9,426.2 1036.9,427.7 1036.9,429.0 1037.0,430.3 1037.1,431.4 1037.3,432.5 1037.6,433.3 1038.0,434.2 1038.6,435.0 1039.4,435.8 1040.5,436.6 1041.8,437.4 1043.1,438.3 1044.4,439.3 1045.7,440.3 1046.8,441.4 1047.7,442.5 1048.5,443.7 1049.2,444.8 1049.7,445.9 1050.2,447.0 1050.6,448.0 1051.0,449.1 1051.3,450.2 1051.6,451.2 1051.8,452.3 1051.9,453.3 1051.9,454.3 1051.9,455.3 1051.9,456.2 1051.9,457.0 1051.9,457.9 1051.9,458.8 1052.0,459.7 1052.1,460.7 1052.1,461.7 1052.2,462.8 1052.2,464.0 1052.1,465.1 1051.9,466.3 1051.6,467.6 1051.3,468.8 1050.9,470.0 1050.5,471.3 1050.0,472.7 1049.5,474.0 1048.8,475.3 1048.0,476.6 1047.2,477.9 1046.2,479.3 1045.2,480.6 1044.1,482.0 1042.9,483.3 1041.7,484.6 1040.4,485.7 1039.0,486.8 1037.6,487.6 1036.1,488.3 1034.6,488.9 1033.1,489.4 1031.7,489.7 1030.3,490.1 1028.9,490.4 1027.6,490.6 1026.3,490.9 1025.1,491.1 1023.8,491.3 1022.6,491.4 1021.4,491.6 1020.3,491.7 1019.1,491.8 1017.9,491.9 1016.6,492.0 1015.2,492.2 1013.9,492.3 1012.5,492.5 1011.1,492.6 1009.7,492.7 1008.4,492.8 1007.2,492.9 1006.2,492.9 1005.3,493.0 1004.4,493.0 1003.6,493.0 1002.7,492.9 1001.7,492.8 1000.7,492.7 999.5,492.5 998.2,492.2 996.7,491.9 995.1,491.5 993.4,491.1 991.7,490.6 990.0,490.1 988.3,489.4 986.8,488.7 985.4,488.0 984.0,487.1 982.7,486.2 981.4,485.2 980.2,484.2 979.0,483.0 978.0,481.8 977.0,480.5 976.2,479.0 975.4,477.5 974.8,476.0 974.3,474.3 973.8,472.7 973.4,471.0 973.1,469.3 972.9,467.6 972.8,465.9 972.8,464.2 972.8,462.4 973.0,460.6 973.2,458.9 973.4,457.2 973.6,455.5 973.7,453.8 973.9,452.2 974.1,450.5 974.3,448.8 974.5,447.2 974.7,445.6 974.9,444.0 975.0,442.4 975.1,440.8 975.1,439.2 975.2,437.5 975.2,435.9 975.2,434.2 975.1,432.7 975.0,431.1 974.7,429.6 974.5,428.1 974.1,426.7 973.7,425.3 973.1,423.9 972.6,422.5 971.9,421.1 971.3,419.8 970.5,418.5 969.7,417.3 968.9,416.2 968.0,415.1 967.1,414.0 966.1,413.0 965.0,412.0 963.9,411.1 962.7,410.1 961.4,409.1 960.0,408.1 958.6,407.1 957.0,406.2 955.4,405.2 953.8,404.3 952.1,403.5 950.5,402.7 948.8,402.0 947.2,401.5 945.5,401.0 943.7,400.5 942.0,400.2 940.2,399.8 938.4,399.6 936.6,399.4 934.9,399.3 933.1,399.2 931.3,399.3 929.5,399.3 927.7,399.5 925.9,399.7 924.2,399.9 922.5,400.3 920.9,400.6 919.4,401.0 917.9,401.5 916.4,402.1 915.0,402.7 913.6,403.3 912.3,404.0 911.1,404.7 909.9,405.5 908.7,406.3 907.6,407.1 906.6,408.0 905.6,408.8 904.7,409.7 903.9,410.7 903.2,411.7 902.6,412.7 902.1,413.8 901.6,414.9 901.3,416.1 901.0,417.4 900.8,418.7 900.6,420.1 900.6,421.5 900.7,423.0 900.9,424.5 901.2,426.1 901.6,427.9 902.1,429.6 902.7,431.4 903.4,433.3 904.1,435.1 904.9,436.8 905.7,438.6 906.7,440.3 907.7,442.1 908.8,443.8 910.0,445.6 911.2,447.5 912.4,449.3 913.6,451.3 914.8,453.2 916.1,455.2 917.4,457.2 918.8,459.2 920.1,461.3 921.4,463.4 922.7,465.5 923.9,467.5 925.1,469.6 926.3,471.7 927.5,473.7 928.6,475.8 929.7,477.8 930.8,479.9 931.8,481.9 932.8,483.9 933.8,485.9 934.8,487.8 935.7,489.8 936.6,491.8 937.4,493.6 938.3,495.5 939.1,497.2 939.9,498.9 940.8,500.5 941.5,502.0 942.3,503.4 943.0,504.7 943.8,506.1 944.5,507.4 945.4,508.7 946.3,510.1 947.4,511.5 948.5,512.9 949.6,514.4 950.8,515.8 952.1,517.3 953.4,518.6 954.6,519.9 955.9,521.1 957.2,522.3 958.5,523.3 960.0,524.3 961.4,525.3 962.9,526.3 964.4,527.3 965.9,528.3 967.3,529.3 968.5,530.4 969.7,531.4 970.7,532.4 971.7,533.4 972.7,534.5 973.7,535.5 974.8,536.6 975.9,537.8 977.0,539.2 978.2,540.6 979.4,542.1 980.5,543.6 981.7,545.1 982.9,546.5 984.2,547.9 985.5,549.2 986.9,550.4 988.5,551.6 990.2,552.9 991.9,554.1 993.7,555.3 995.4,556.6 997.1,557.8 998.5,558.9 999.9,560.0 1001.2,561.0 1002.4,562.0 1003.6,563.0 1004.8,564.1 1005.8,565.3 1006.7,566.6 1007.5,568.1 1008.0,569.7 1008.4,571.3 1008.6,572.9 1008.7,574.6 1008.6,576.3 1008.4,578.0 1008.0,579.7 1007.6,581.4 1007.1,583.1 1006.4,584.9 1005.6,586.7 1004.8,588.5 1003.7,590.4 1002.6,592.2 1001.3,594.0 999.9,595.8 998.3,597.6 996.6,599.2 994.8,600.9 992.9,602.6 990.9,604.2 988.8,605.8 986.7,607.4 984.5,609.0 982.2,610.7 979.7,612.4 977.2,614.1 974.6,615.8 972.0,617.4 969.4,619.1 966.9,620.6 964.5,622.1 962.2,623.6 960.0,625.0 957.7,626.5 955.5,627.9 953.3,629.3 951.1,630.5 948.9,631.5 946.8,632.4 944.8,633.0 942.8,633.4 940.8,633.7 938.9,633.8 937.0,633.8 935.3,633.6 933.6,633.2 932.0,632.7 930.6,632.0 929.2,631.0 928.1,629.9 927.0,628.6 926.2,627.2 925.5,625.8 924.8,624.2 924.3,622.5 924.1,620.6 924.0,618.6 924.1,616.5 924.3,614.4 924.5,612.4 924.6,610.5 924.6,608.8 924.5,607.3 924.3,605.9 924.0,604.7 923.7,603.5 923.4,602.4 922.9,601.5 922.4,600.6 921.8,599.7 921.1,598.9 920.2,598.1 919.1,597.3 917.8,596.5 916.4,595.7 914.8,595.0 913.3,594.2 911.7,593.5 910.3,592.7 908.9,592.0 907.6,591.4 906.2,590.8 904.8,590.2 903.3,589.6 901.9,588.8 900.5,587.9 899.3,586.8 898.2,585.6 897.2,584.3 896.3,583.0 895.5,581.6 894.9,580.1 894.2,578.7 893.7,577.3 893.1,575.8 892.6,574.2 892.2,572.6 891.9,570.9 891.7,569.3 891.4,567.7 891.2,566.2 890.9,564.8 890.6,563.6 890.3,562.5 890.0,561.6 889.7,560.7 889.4,560.0 889.1,559.3 888.8,558.7 888.3,558.0 887.6,557.1 886.8,556.2 885.8,555.3 884.7,554.3 883.4,553.2 882.1,552.2 880.7,551.2 879.3,550.2 877.8,549.2 876.2,548.3 874.4,547.4 872.5,546.4 870.6,545.5 868.6,544.6 866.7,543.7 864.8,542.8 863.2,541.9 861.8,541.1 860.5,540.4 859.3,539.7 858.2,539.0 857.1,538.3 856.0,537.5 854.9,536.6 853.8,535.6 852.7,534.4 851.7,533.2 850.6,531.8 849.6,530.5 848.6,529.0 847.7,527.6 846.8,526.1 846.0,524.7 845.3,523.2 844.6,521.7 844.0,520.2 843.5,518.8 842.9,517.3 842.5,515.7 842.0,514.2 841.4,512.6 840.9,510.9 840.3,509.1 839.8,507.3 839.3,505.5 838.8,503.6 838.2,501.7 837.6,499.8 837.0,497.9 836.4,495.9 835.7,493.8 835.0,491.7 834.2,489.6 833.5,487.4 832.7,485.1 831.9,482.9 831.2,480.7 830.5,478.4 829.8,476.0 829.1,473.7 828.4,471.3 827.7,468.9 827.0,466.6 826.3,464.4 825.6,462.2 824.9,460.1 824.2,458.1 823.4,456.0 822.7,454.1 821.9,452.1 821.1,450.2 820.4,448.3 819.6,446.3 818.8,444.4 818.0,442.5 817.2,440.6 816.4,438.8 815.6,436.9 814.8,435.1 814.1,433.3 813.4,431.5 812.7,429.9 812.1,428.2 811.5,426.7 810.9,425.1 810.3,423.5 809.8,422.0 809.3,420.3 808.9,418.7 808.7,417.0 808.5,415.3 808.4,413.6 808.3,412.0 808.3,410.4 808.3,408.9 808.3,407.4 808.2,406.0 808.1,404.6 808.1,403.2 808.1,401.9 808.1,400.7 808.1,399.6 808.0,398.5 807.9,397.6 807.7,396.6 807.4,395.8 807.0,394.9 806.6,394.0 806.1,393.1 805.6,392.3 805.1,391.6 804.6,390.9 804.1,390.4 803.6,390.0 803.1,389.6 802.5,389.3 801.9,389.1 801.3,388.9 800.7,388.7 800.1,388.6 799.6,388.6 799.1,388.6 798.6,388.7 798.0,388.8 797.5,389.0 796.9,389.3 796.3,389.6 795.7,390.0 795.1,390.5 794.5,391.1 793.9,391.7 793.2,392.5 792.6,393.3 791.9,394.2 791.3,395.1 790.7,396.1 790.1,397.2 789.5,398.3 789.0,399.5 788.5,400.7 788.0,402.0 787.5,403.4 787.0,404.9 786.5,406.4 786.0,407.9 785.5,409.4 785.0,411.0 784.5,412.7 784.0,414.4 783.5,416.1 783.1,417.8 782.7,419.5 782.3,421.2 782.0,422.9 781.7,424.6 781.4,426.3 781.1,427.9 780.9,429.6 780.7,431.2 780.6,432.8 780.5,434.4 780.5,435.9 780.5,437.4 780.6,438.9 780.7,440.3 780.9,441.8 781.2,443.2 781.4,444.6 781.7,446.0 782.1,447.4 782.5,448.7 783.0,450.1 783.5,451.4 784.0,452.7 784.6,454.0 785.2,455.3 785.8,456.5 786.5,457.7 787.2,458.9 787.9,460.0 788.7,461.2 789.6,462.4 790.4,463.7 791.3,465.0 792.0,466.5 792.8,468.0 793.4,469.6 794.0,471.3 794.6,472.9 795.1,474.5 795.7,476.0 796.3,477.4 796.9,478.8 797.6,480.0 798.3,481.0 799.0,482.1 799.8,483.2 800.7,484.3 801.6,485.6 802.5,486.9 803.4,488.4 804.3,490.1 805.2,491.9 806.2,493.8 807.2,495.7 808.1,497.7 809.1,499.6 809.9,501.5 810.8,503.3 811.5,505.0 812.3,506.7 813.1,508.3 813.8,509.9 814.5,511.6 815.1,513.3 815.7,515.2 816.2,517.1 816.5,519.2 816.7,521.3 816.7,523.5 816.7,525.7 816.7,527.8 816.7,529.8 816.8,531.8 816.9,533.6 817.1,535.4 817.2,537.1 817.4,538.8 817.6,540.4 817.8,541.9 818.1,543.4 818.5,544.8 819.0,546.3 819.5,547.7 820.1,549.1 820.9,550.6 821.6,552.0 822.5,553.4 823.4,554.7 824.3,556.0 825.2,557.3 826.1,558.4 827.1,559.4 828.1,560.4 829.2,561.4 830.4,562.5 831.5,563.5 832.7,564.7 833.9,565.9 835.1,567.1 836.2,568.4 837.4,569.7 838.5,571.0 839.6,572.4 840.7,573.7 841.8,575.0 842.9,576.4 843.9,577.7 844.8,578.9 845.8,580.2 846.7,581.5 847.6,582.8 848.5,584.1 849.4,585.5 850.3,586.9 851.2,588.3 852.1,589.8 852.9,591.3 853.7,592.8 854.5,594.3 855.3,595.8 856.2,597.3 857.0,598.7 857.9,600.0 858.7,601.2 859.6,602.4 860.5,603.6 861.4,604.9 862.5,606.4 863.7,608.1 865.0,610.0 866.4,612.3 868.1,614.8 869.8,617.5 871.5,620.3 873.4,623.2 875.2,626.1 877.0,628.8 878.8,631.4 880.5,633.8 882.3,636.2 884.1,638.6 885.9,641.0 887.7,643.3 889.4,645.5 891.0,647.6 892.5,649.7 893.9,651.6 895.3,653.5 896.6,655.2 897.9,656.9 899.0,658.6 900.1,660.3 901.1,662.1 901.9,664.0 902.6,665.9 903.1,667.8 903.4,669.8 903.7,671.7 903.8,673.5 903.8,675.3 903.8,677.1 903.7,678.9 903.5,680.6 903.2,682.3 902.8,684.0 902.3,685.5 901.9,687.0 901.4,688.5 900.9,690.0 900.5,691.5 900.1,693.2 899.7,695.0 899.2,696.8 898.8,698.6 898.3,700.4 898.0,702.1 897.7,703.6 897.5,705.0 897.4,706.2 897.3,707.2 897.3,708.0 897.4,708.8 897.5,709.6 897.6,710.5 897.8,711.4 898.0,712.6 898.2,713.8 898.4,715.1 898.6,716.4 898.8,717.7 899.2,719.0 899.6,720.3 900.1,721.7 900.7,723.1 901.6,724.6 902.5,726.3 903.6,728.0 904.8,729.8 906.1,731.6 907.5,733.4 908.9,735.2 910.4,736.8 911.9,738.4 913.4,740.0 915.1,741.6 916.9,743.1 918.7,744.7 920.5,746.2 922.4,747.8 924.4,749.4 926.4,751.0 928.4,752.6 930.5,754.3 932.7,756.0 934.8,757.6 937.0,759.2 939.1,760.6 941.2,762.0 943.3,763.2 945.5,764.4 947.7,765.5 949.9,766.6 952.1,767.6 954.2,768.6 956.2,769.5 958.1,770.4 959.8,771.3 961.4,772.0 962.8,772.7 964.2,773.4 965.6,774.0 967.0,774.7 968.3,775.5 969.6,776.2 971.0,777.0 972.4,777.8 973.7,778.7 975.1,779.5 976.5,780.5 977.8,781.5 979.1,782.6 980.3,783.9 981.3,785.4 982.2,787.0 982.9,788.6 983.5,790.2 984.1,791.8 984.7,793.2 985.3,794.4 986.1,795.5 986.8,796.5 987.6,797.4 988.5,798.3 989.3,799.1 990.2,799.9 991.2,800.5 992.3,801.1 993.5,801.7 994.9,802.1 996.5,802.6 998.2,802.9 1000.1,803.2 1002.0,803.4 1004.1,803.6 1006.2,803.7 1008.3,803.7 1010.5,803.7 1012.9,803.5 1015.5,803.3 1018.0,803.0 1020.6,802.7 1023.1,802.3 1025.5,801.9 1027.8,801.5 1029.8,801.1 1031.8,800.7 1033.7,800.3 1035.5,799.9 1037.1,799.4 1038.6,798.9 1040.0,798.3 1041.2,797.7 1042.3,796.9 1043.3,796.1 1044.2,795.2 1045.0,794.3 1045.7,793.3 1046.3,792.3 1046.8,791.3 1047.3,790.3 1047.6,789.4 1047.8,788.4 1047.9,787.3 1048.0,786.3 1047.9,785.2 1047.8,784.2 1047.6,783.1 1047.3,782.1 1046.8,781.0 1046.3,780.0 1045.6,779.0 1044.8,777.8 1043.8,776.7 1042.8,775.5 1041.8,774.2 1040.6,773.0 1039.5,771.6 1038.2,770.3 1036.9,769.0 1035.5,767.6 1034.0,766.1 1032.5,764.7 1031.0,763.2 1029.4,761.7 1027.8,760.2 1026.1,758.7 1024.4,757.2 1022.6,755.6 1020.7,754.0 1018.9,752.3 1017.0,750.6 1015.1,748.8 1013.2,747.0 1011.2,745.1 1009.2,743.1 1007.3,741.1 1005.3,739.1 1003.3,737.1 1001.3,735.1 999.3,733.2 997.3,731.2 995.3,729.1 993.2,727.1 991.1,725.0 989.1,723.0 987.2,721.0 985.4,719.2 983.7,717.4 982.2,715.8 980.8,714.3 979.6,712.8 978.4,711.5 977.4,710.2 976.3,709.0 975.3,707.9 974.2,706.8 973.1,705.7 972.0,704.7 971.0,703.7 969.9,702.8 968.8,701.9 967.7,700.9 966.5,699.9 965.3,698.9 964.0,697.9 962.7,696.8 961.3,695.7 959.8,694.6 958.3,693.4 956.9,692.2 955.5,690.9 954.3,689.5 953.2,688.2 952.1,686.7 951.2,685.3 950.3,683.8 949.5,682.3 948.7,680.8 948.1,679.3 947.7,677.9 947.4,676.5 947.2,675.1 947.1,673.7 947.1,672.3 947.3,670.9 947.6,669.6 948.1,668.2 948.7,666.8 949.5,665.5 950.4,664.2 951.5,662.9 952.7,661.7 953.9,660.5 955.1,659.3 956.4,658.1 957.6,657.0 958.8,655.8 960.0,654.7 961.3,653.6 962.6,652.5 963.9,651.4 965.4,650.2 966.8,649.0 968.4,647.7 970.1,646.3 971.9,644.7 973.8,643.1 975.8,641.4 977.8,639.8 979.9,638.2 981.9,636.6 983.9,635.3 985.9,634.1 987.8,633.0 989.8,632.0 991.7,631.0 993.6,630.1 995.5,629.4 997.4,628.7 999.3,628.1 1001.2,627.6 1003.1,627.2 1005.0,626.9 1006.9,626.7 1008.7,626.6 1010.5,626.6 1012.3,626.7 1014.1,626.8 1015.9,627.1 1017.5,627.5 1019.1,628.0 1020.7,628.6 1022.1,629.2 1023.6,629.7 1025.1,630.2 1026.7,630.7 1028.4,631.2 1030.3,631.7 1032.2,632.2 1034.0,632.7 1035.9,633.2 1037.7,633.5 1039.5,633.7 1041.2,633.7 1042.9,633.5 1044.8,633.2 1046.6,632.8 1048.5,632.3 1050.3,631.7 1052.1,630.9 1053.8,630.2 1055.4,629.4 1056.9,628.6 1058.4,627.7 1059.7,626.7 1061.0,625.7 1062.2,624.6 1063.3,623.4 1064.3,622.3 1065.2,621.0 1066.0,619.7 1066.8,618.2 1067.4,616.7 1068.0,615.1 1068.5,613.4 1068.9,611.7 1069.2,610.1 1069.4,608.4 1069.5,606.8 1069.6,605.2 1069.5,603.6 1069.4,602.0 1069.1,600.4 1068.8,598.8 1068.4,597.3 1068.0,595.8 1067.4,594.3 1066.6,592.9 1065.8,591.5 1064.8,590.0 1063.8,588.5 1062.7,587.1 1061.7,585.6 1060.7,584.2 1059.7,582.8 1058.7,581.5 1057.7,580.2 1056.6,578.9 1055.5,577.5 1054.5,576.1 1053.6,574.6 1052.8,573.1 1052.1,571.5 1051.4,569.9 1050.9,568.3 1050.4,566.6 1050.1,564.9 1049.8,563.2 1049.6,561.6 1049.5,559.9 1049.5,558.2 1049.6,556.6 1049.8,555.0 1050.1,553.4 1050.4,551.7 1050.9,550.1 1051.4,548.4 1051.9,546.7 1052.6,544.8 1053.4,542.8 1054.3,540.8 1055.3,538.8 1056.3,536.8 1057.2,534.8 1058.1,532.9 1058.9,531.2 1059.7,529.5 1060.3,527.9 1061.0,526.4 1061.6,524.9 1062.3,523.4 1062.9,521.9 1063.6,520.4 1064.4,518.9 1065.1,517.4 1065.9,515.9 1066.7,514.5 1067.4,513.0 1068.2,511.6 1069.0,510.1 1069.9,508.6 1070.7,507.1 1071.5,505.4 1072.4,503.6 1073.3,501.8 1074.2,499.9 1075.1,498.0 1076.0,496.2 1076.9,494.4 1077.9,492.8 1078.8,491.3 1079.7,489.9 1080.6,488.6 1081.6,487.4 1082.5,486.2 1083.4,485.1 1084.3,484.0 1085.3,483.0 1086.2,482.0 1087.1,481.2 1088.0,480.4 1088.9,479.6 1089.8,478.9 1090.7,478.2 1091.7,477.5 1092.7,476.7 1093.9,476.0 1095.1,475.2 1096.4,474.5 1097.7,473.9 1098.9,473.2 1100.0,472.6 1100.9,471.9 1101.8,471.1 1102.5,470.3 1103.2,469.4 1103.9,468.4 1104.5,467.4 1105.1,466.3 1105.6,465.2 1106.0,464.1 1106.4,462.9 1106.6,461.7 1106.8,460.4 1106.9,459.2 1107.0,457.8 1107.0,456.4 1106.9,454.8 1106.8,453.1 1106.7,451.2 1106.5,449.1 1106.3,446.9 1106.1,444.6 1105.7,442.1 1105.4,439.6 1105.0,437.1 1104.6,434.6 1104.2,432.1 1103.8,429.7 1103.4,427.3 1102.9,424.9 1102.5,422.5 1102.0,420.0 1101.5,417.5 1101.0,414.9 1100.4,412.3 1099.9,409.5 1099.3,406.7 1098.8,403.8 1098.2,400.8 1097.6,397.9 1097.0,395.0 1096.4,392.1 1095.8,389.4 1095.3,386.7 1094.8,384.2 1094.3,381.6 1093.8,379.2 1093.3,376.7 1092.8,374.3 1092.4,371.9 1091.9,369.4 1091.5,367.0 1091.1,364.6 1090.7,362.1 1090.3,359.7 1089.9,357.4 1089.6,355.1 1089.2,353.0 1088.9,350.9 1088.7,349.1 1088.5,347.3 1088.3,345.6 1088.2,344.1 1088.0,342.7 1087.9,341.4 1087.6,340.2 1087.4,339.0 1087.1,337.9 1086.7,337.0 1086.4,336.1 1086.0,335.3 1085.6,334.5 1085.2,333.8 1084.7,333.1 1084.1,332.3 1083.4,331.6 1082.7,330.9 1081.9,330.1 1081.0,329.4 1080.1,328.7 1079.1,328.0 1078.1,327.4 1077.1,326.7 1076.1,326.2 1075.0,325.6 1073.8,325.1 1072.5,324.5 1071.3,323.9 1070.0,323.4 1068.9,322.7 1067.8,322.1 1066.9,321.4 1066.1,320.8 1065.4,320.1 1064.7,319.4 1064.1,318.6 1063.5,317.7 1063.1,316.7 1062.8,315.7 1062.6,314.7 1062.4,313.6 1062.4,312.5 1062.4,311.3 1062.6,310.1 1062.8,308.9 1063.1,307.7 1063.6,306.4 1064.1,305.1 1064.9,303.7 1065.7,302.4 1066.5,301.1 1067.4,299.8 1068.1,298.5 1068.8,297.2 1069.4,296.0 1070.0,294.7 1070.5,293.3 1071.0,291.9 1071.4,290.5 1071.8,289.1 1072.2,287.8 1072.4,286.4 1072.5,285.1 1072.5,283.9 1072.5,282.5 1072.3,281.2 1072.1,279.9 1071.8,278.5 1071.5,277.2 1071.1,275.9 1070.7,274.6 1070.2,273.4 1069.6,272.2 1069.0,271.0 1068.3,269.8 1067.5,268.6 1066.7,267.3 1065.8,266.0 1065.0,264.6 1064.2,263.1 1063.4,261.7 1062.6,260.3 1061.7,258.8 1060.8,257.3 1060.0,255.6 1059.1,253.9 1058.2,252.0 1057.4,250.0 1056.5,247.9 1055.6,245.6 1054.8,243.3 1053.9,241.0 1053.1,238.8 1052.4,236.6 1051.6,234.6 1051.0,232.8 1050.3,231.0 1049.7,229.3 1049.1,227.7 1048.6,226.0 1048.1,224.4 1047.6,222.8 1047.2,221.2 1046.8,219.6 1046.5,217.9 1046.3,216.4 1046.0,214.8 1045.9,213.3 1045.8,211.8 1045.7,210.3 1045.6,208.8 1045.6,207.3 1045.7,205.9 1045.9,204.5 1046.1,203.1 1046.2,201.9 1046.3,200.8 1046.4,199.7 1046.3,198.7 1046.2,197.8 1046.0,196.8 1045.8,195.9 1045.5,195.0 1045.2,194.2 1044.8,193.4 1044.4,192.6 1043.9,191.9 1043.3,191.2 1042.7,190.5 1041.9,189.8 1041.1,189.1 1040.3,188.5 1039.4,187.9 1038.4,187.3 1037.5,186.9 1036.5,186.5 1035.4,186.1 1034.4,185.7 1033.3,185.5 1032.1,185.2 1030.9,185.1 1029.6,185.0 1028.2,184.9 1026.7,184.9 1025.2,185.0 1023.6,185.2 1021.9,185.4 1020.1,185.6 1018.2,185.9 1016.1,186.3 1013.9,186.6 1011.5,186.9 1009.0,187.3 1006.4,187.7 1003.6,188.1 1000.8,188.5 997.9,189.0 994.9,189.5 991.9,190.0 988.8,190.5 985.4,191.0 982.0,191.5 978.5,192.1 975.1,192.7 971.7,193.2 968.5,193.8 965.5,194.4 962.7,194.9 960.0,195.5 957.4,196.1 954.9,196.7 952.5,197.2 950.2,197.8 947.8,198.3" fill="none" stroke="#2ca02c" stroke-width="1.35"/>
 <polygon points="945.0,196.4 942.8,196.9 940.7,197.3 938.7,197.7 936.8,198.1 934.8,198.5 932.8,198.8 930.8,199.2 928.6,199.6 926.3,200.0 923.9,200.4 921.5,200.8 919.0,201.2 916.5,201.5 914.0,202.0 911.6,202.4 909.1,202.8 906.6,203.3 904.2,203.7 901.6,204.2 899.1,204.7 896.7,205.2 894.3,205.7 891.9,206.2 889.7,206.7 887.6,207.2 885.5,207.7 883.5,208.1 881.6,208.6 879.7,209.1 877.8,209.6 876.0,210.1 874.2,210.6 872.4,211.1 870.7,211.7 869.1,212.2 867.5,212.8 865.9,213.3 864.3,213.9 862.7,214.5 861.2,215.1 859.7,215.7 858.1,216.3 856.6,216.9 855.1,217.5 853.6,218.1 852.2,218.8 850.9,219.5 849.6,220.3 848.4,221.1 847.3,222.0 846.3,223.0 845.3,224.0 844.3,225.0 843.4,226.0 842.6,227.0 841.8,228.1 841.1,229.2 840.4,230.2 839.7,231.3 839.1,232.4 838.6,233.6 838.1,234.7 837.7,235.9 837.3,237.1 837.0,238.3 836.7,239.6 836.5,240.8 836.3,242.1 836.2,243.5 836.1,244.8 836.0,246.1 836.0,247.5 836.0,248.9 836.0,250.3 836.0,251.8 836.0,253.3 836.1,254.8 836.3,256.3 836.5,257.7 836.7,259.1 837.0,260.5 837.3,261.8 837.7,263.2 838.2,264.5 838.6,265.8 839.2,267.1 839.8,268.3 840.5,269.5 841.3,270.6 842.1,271.7 843.0,272.8 844.0,273.8 845.0,274.8 846.1,275.7 847.2,276.5 848.3,277.3 849.5,278.0 850.7,278.6 852.0,279.2 853.3,279.7 854.7,280.1 856.0,280.5 857.4,280.8 858.7,281.1 860.0,281.3 861.2,281.5 862.5,281.5 863.8,281.6 865.0,281.5 866.3,281.5 867.6,281.3 869.0,281.1 870.4,280.8 871.9,280.5 873.3,280.1 874.9,279.6 876.4,279.1 877.8,278.5 879.3,277.9 880.7,277.3 882.1,276.6 883.4,275.9 884.8,275.1 886.1,274.2 887.4,273.4 888.6,272.5 889.8,271.6 891.0,270.8 892.1,270.0 893.2,269.2 894.2,268.4 895.1,267.6 896.1,266.7 897.0,265.9 897.9,265.1 898.8,264.3 899.6,263.5 900.4,262.7 901.2,261.9 901.9,261.1 902.6,260.3 903.4,259.5 904.3,258.7 905.3,257.8 906.4,256.9 907.5,255.9 908.8,254.9 910.0,254.0 911.4,253.0 912.7,252.0 914.2,251.0 915.6,250.1 917.1,249.2 918.6,248.4 920.1,247.5 921.7,246.7 923.4,245.9 925.0,245.1 926.8,244.3 928.6,243.6 930.5,242.9 932.7,242.1 934.9,241.4 937.1,240.7 939.3,240.0 941.4,239.4 943.3,238.9 945.0,238.4 946.4,238.0 947.4,237.8 948.3,237.6 949.1,237.5 949.9,237.3 950.8,237.2 951.8,237.0 953.2,236.8 954.9,236.5 956.7,236.1 958.8,235.6 960.9,235.2 963.1,234.7 965.3,234.3 967.4,234.0 969.4,233.8 971.3,233.7 973.2,233.6 975.1,233.6 977.0,233.7 978.9,233.8 980.7,234.0 982.4,234.3 984.1,234.6 985.7,235.0 987.3,235.5 988.9,236.0 990.4,236.7 991.8,237.3 993.2,238.1 994.6,238.9 995.9,239.7 997.2,240.6 998.4,241.6 999.5,242.6 1000.6,243.7 1001.7,244.8 1002.7,246.0 1003.7,247.2 1004.7,248.5 1005.7,249.8 1006.6,251.2 1007.6,252.7 1008.5,254.2 1009.3,255.7 1010.1,257.3 1010.8,258.8 1011.3,260.3 1011.7,261.8 1012.0,263.3 1012.3,264.7 1012.4,266.2 1012.4,267.7 1012.4,269.2 1012.3,270.6 1012.1,272.1 1011.8,273.6 1011.4,275.2 1011.0,276.7 1010.5,278.3 1009.8,279.8 1009.2,281.3 1008.4,282.6 1007.6,283.8 1006.7,284.9 1005.7,285.8 1004.6,286.7 1003.5,287.4 1002.3,288.1 1001.1,288.7 999.9,289.3 998.8,289.7 997.7,290.1 996.7,290.3 995.6,290.5 994.6,290.6 993.5,290.6 992.4,290.6 991.2,290.5 990.0,290.4 988.7,290.2 987.3,289.9 985.8,289.6 984.3,289.2 982.7,288.7 981.2,288.3 979.7,287.9 978.2,287.5 976.8,287.1 975.4,286.7 974.0,286.4 972.6,286.0 971.2,285.6 969.7,285.2 968.2,284.9 966.5,284.6 964.7,284.3 962.7,284.0 960.6,283.7 958.4,283.4 956.3,283.2 954.2,283.0 952.3,282.8 950.5,282.8 948.9,282.8 947.5,282.9 946.2,283.1 944.9,283.3 943.7,283.6 942.6,283.9 941.4,284.2 940.3,284.6 939.2,285.0 938.2,285.4 937.2,285.8 936.2,286.3 935.2,286.8 934.3,287.4 933.3,288.1 932.2,288.8 931.1,289.7 929.8,290.7 928.6,291.9 927.3,293.1 926.0,294.2 924.8,295.4 923.7,296.4 922.7,297.2 921.9,297.8 921.2,298.3 920.6,298.7 920.1,299.0 919.6,299.3 919.0,299.6 918.3,299.9 917.4,300.4 916.3,300.9 915.1,301.5 913.7,302.1 912.3,302.7 910.9,303.4 909.4,304.1 908.1,304.9 906.8,305.7 905.6,306.6 904.5,307.5 903.4,308.5 902.4,309.6 901.3,310.6 900.3,311.8 899.3,313.0 898.3,314.2 897.3,315.5 896.3,316.9 895.4,318.3 894.4,319.7 893.5,321.2 892.6,322.7 891.7,324.3 890.9,325.8 890.1,327.4 889.3,329.0 888.5,330.6 887.8,332.3 887.1,333.9 886.5,335.5 886.0,337.1 885.6,338.6 885.3,340.0 885.1,341.5 885.0,342.9 884.9,344.2 885.0,345.5 885.1,346.8 885.3,348.0 885.6,349.2 886.0,350.4 886.5,351.6 887.1,352.8 887.7,353.9 888.4,355.0 889.2,355.9 890.0,356.6 890.9,357.1 891.8,357.4 892.8,357.5 893.8,357.5 894.8,357.3 895.9,357.0 897.1,356.6 898.2,356.1 899.4,355.5 900.6,354.8 901.9,353.8 903.2,352.7 904.6,351.5 905.9,350.3 907.3,349.1 908.7,348.0 910.0,347.0 911.3,346.1 912.7,345.2 914.0,344.3 915.4,343.4 916.7,342.7 918.0,341.9 919.3,341.3 920.6,340.7 921.8,340.2 922.8,339.9 923.8,339.6 924.8,339.4 925.9,339.2 927.1,339.0 928.5,338.8 930.1,338.6 932.1,338.3 934.3,338.0 936.7,337.8 939.3,337.5 941.9,337.2 944.4,336.9 946.9,336.6 949.2,336.4 951.4,336.2 953.4,335.9 955.5,335.6 957.5,335.4 959.4,335.2 961.3,335.0 963.2,334.9 965.0,334.9 966.8,334.9 968.5,335.0 970.1,335.1 971.7,335.2 973.3,335.5 974.9,335.7 976.4,336.1 978.0,336.5 979.6,337.0 981.1,337.6 982.7,338.2 984.2,338.9 985.7,339.6 987.2,340.4 988.6,341.3 990.0,342.2 991.3,343.2 992.5,344.3 993.7,345.4 994.8,346.6 995.9,347.8 997.0,349.0 998.1,350.2 999.2,351.4 1000.4,352.5 1001.6,353.7 1002.8,354.8 1004.0,356.0 1005.2,357.1 1006.3,358.3 1007.4,359.4 1008.3,360.6 1009.1,361.7 1009.9,362.9 1010.6,364.0 1011.2,365.1 1011.7,366.2 1012.2,367.4 1012.6,368.6 1012.9,369.8 1013.1,371.1 1013.2,372.4 1013.2,373.7 1013.1,375.1 1013.0,376.4 1013.0,377.8 1012.9,379.2 1012.9,380.5 1012.9,381.9 1012.9,383.3 1012.9,384.7 1012.9,386.1 1012.9,387.5 1013.1,388.8 1013.3,390.0 1013.7,391.2 1014.3,392.2 1014.9,393.2 1015.7,394.1 1016.6,394.9 1017.6,395.7 1018.6,396.5 1019.6,397.2 1020.6,398.0 1021.7,398.7 1022.8,399.4 1024.1,400.0 1025.3,400.7 1026.6,401.3 1027.8,401.9 1028.9,402.6 1029.8,403.4 1030.6,404.2 1031.4,405.0 1032.0,405.8 1032.6,406.7 1033.1,407.6 1033.6,408.6 1034.0,409.7 1034.3,411.0 1034.5,412.4 1034.6,414.1 1034.6,415.9 1034.5,417.7 1034.4,419.6 1034.3,421.4 1034.3,423.2 1034.3,424.8 1034.4,426.3 1034.4,427.8 1034.5,429.2 1034.5,430.5 1034.7,431.9 1034.9,433.1 1035.3,434.3 1035.9,435.5 1036.7,436.6 1037.8,437.6 1039.0,438.6 1040.3,439.5 1041.6,440.4 1042.9,441.3 1044.1,442.2 1045.0,443.1 1045.8,444.1 1046.4,445.0 1047.0,446.0 1047.5,447.0 1047.9,447.9 1048.3,448.9 1048.6,449.9 1048.9,450.8 1049.1,451.7 1049.3,452.6 1049.4,453.5 1049.4,454.4 1049.4,455.3 1049.4,456.2 1049.4,457.1 1049.4,458.0 1049.4,458.9 1049.5,459.9 1049.6,460.8 1049.7,461.8 1049.7,462.8 1049.7,463.8 1049.6,464.8 1049.4,465.9 1049.2,467.0 1048.9,468.1 1048.6,469.3 1048.2,470.5 1047.7,471.7 1047.2,472.9 1046.6,474.1 1045.9,475.3 1045.1,476.5 1044.2,477.8 1043.2,479.1 1042.2,480.4 1041.1,481.6 1039.9,482.8 1038.8,483.8 1037.6,484.7 1036.4,485.4 1035.1,486.0 1033.8,486.5 1032.4,487.0 1031.1,487.3 1029.7,487.6 1028.4,487.9 1027.1,488.2 1025.9,488.5 1024.7,488.7 1023.5,488.8 1022.3,489.0 1021.2,489.1 1020.0,489.2 1018.8,489.3 1017.6,489.4 1016.3,489.5 1015.0,489.7 1013.6,489.9 1012.2,490.0 1010.8,490.1 1009.5,490.3 1008.3,490.3 1007.1,490.4 1006.1,490.4 1005.2,490.5 1004.4,490.5 1003.7,490.5 1002.9,490.4 1002.0,490.4 1001.1,490.2 1000.0,490.0 998.7,489.7 997.2,489.4 995.7,489.1 994.1,488.7 992.4,488.2 990.8,487.7 989.3,487.1 987.9,486.5 986.6,485.8 985.3,485.0 984.1,484.2 983.0,483.3 981.9,482.4 980.9,481.3 979.9,480.3 979.1,479.1 978.4,477.9 977.7,476.5 977.1,475.1 976.6,473.6 976.2,472.1 975.9,470.5 975.6,469.0 975.4,467.4 975.3,465.8 975.3,464.2 975.3,462.5 975.5,460.8 975.7,459.2 975.9,457.5 976.0,455.8 976.2,454.1 976.4,452.4 976.6,450.8 976.8,449.1 977.0,447.5 977.2,445.9 977.4,444.2 977.5,442.6 977.6,440.9 977.6,439.2 977.7,437.5 977.7,435.8 977.7,434.2 977.6,432.5 977.4,430.8 977.2,429.2 976.9,427.6 976.5,426.0 976.0,424.5 975.5,423.0 974.9,421.5 974.2,420.0 973.4,418.6 972.6,417.2 971.8,415.9 970.9,414.7 969.9,413.5 968.9,412.3 967.9,411.2 966.7,410.2 965.5,409.1 964.2,408.1 962.9,407.1 961.5,406.1 959.9,405.0 958.3,404.0 956.7,403.0 954.9,402.1 953.2,401.2 951.5,400.4 949.7,399.7 947.9,399.1 946.1,398.6 944.3,398.1 942.4,397.7 940.6,397.4 938.7,397.1 936.8,396.9 935.0,396.8 933.1,396.7 931.3,396.8 929.4,396.8 927.5,397.0 925.6,397.2 923.8,397.5 922.0,397.8 920.3,398.2 918.7,398.6 917.1,399.2 915.5,399.7 914.0,400.4 912.5,401.1 911.1,401.8 909.8,402.6 908.5,403.4 907.3,404.2 906.1,405.1 904.9,406.1 903.9,407.0 902.8,408.1 901.9,409.2 901.1,410.3 900.4,411.5 899.8,412.8 899.3,414.1 898.9,415.5 898.5,416.9 898.3,418.4 898.1,420.0 898.1,421.6 898.2,423.2 898.4,424.9 898.7,426.7 899.2,428.5 899.7,430.4 900.3,432.3 901.0,434.2 901.8,436.0 902.6,437.9 903.5,439.7 904.5,441.5 905.5,443.3 906.7,445.2 907.9,447.0 909.1,448.8 910.3,450.7 911.5,452.6 912.7,454.6 914.0,456.5 915.3,458.6 916.7,460.6 918.0,462.7 919.3,464.7 920.6,466.8 921.8,468.8 923.0,470.8 924.1,472.9 925.3,474.9 926.4,477.0 927.5,479.0 928.6,481.0 929.6,483.0 930.6,485.0 931.6,487.0 932.5,488.9 933.4,490.9 934.3,492.8 935.1,494.7 936.0,496.5 936.8,498.3 937.7,500.0 938.5,501.6 939.3,503.1 940.1,504.6 940.8,506.0 941.6,507.3 942.4,508.7 943.3,510.1 944.3,511.5 945.4,513.0 946.5,514.5 947.7,516.0 948.9,517.4 950.2,518.9 951.5,520.4 952.9,521.7 954.2,523.0 955.6,524.2 957.0,525.3 958.5,526.4 960.1,527.4 961.6,528.3 963.0,529.3 964.4,530.3 965.7,531.3 966.9,532.3 968.0,533.3 969.0,534.2 970.0,535.2 970.9,536.2 971.9,537.2 972.9,538.3 974.0,539.5 975.1,540.8 976.3,542.2 977.4,543.6 978.6,545.1 979.8,546.7 981.1,548.2 982.4,549.6 983.8,551.0 985.3,552.3 987.0,553.6 988.7,554.9 990.5,556.2 992.3,557.4 994.0,558.6 995.6,559.8 997.0,560.9 998.3,562.0 999.6,563.0 1000.8,564.0 1001.9,564.9 1002.9,565.9 1003.8,566.9 1004.6,567.9 1005.2,569.1 1005.6,570.4 1005.9,571.7 1006.1,573.1 1006.2,574.6 1006.1,576.1 1005.9,577.6 1005.6,579.1 1005.2,580.7 1004.7,582.3 1004.1,584.0 1003.4,585.7 1002.5,587.4 1001.6,589.1 1000.5,590.8 999.3,592.5 998.0,594.2 996.5,595.8 994.9,597.4 993.2,599.0 991.3,600.6 989.3,602.2 987.3,603.8 985.2,605.4 983.0,607.0 980.7,608.6 978.3,610.3 975.8,612.0 973.2,613.7 970.6,615.3 968.1,617.0 965.6,618.5 963.2,620.0 960.9,621.5 958.6,622.9 956.4,624.4 954.2,625.8 952.0,627.1 949.9,628.2 947.9,629.2 946.0,630.0 944.1,630.6 942.3,631.0 940.5,631.2 938.8,631.3 937.2,631.3 935.7,631.1 934.3,630.8 933.0,630.4 931.9,629.8 930.8,629.1 929.9,628.2 929.1,627.2 928.4,626.0 927.7,624.8 927.2,623.4 926.8,622.0 926.5,620.4 926.5,618.6 926.6,616.6 926.8,614.6 927.0,612.5 927.1,610.5 927.1,608.7 927.0,607.0 926.7,605.5 926.5,604.1 926.1,602.8 925.7,601.5 925.2,600.3 924.5,599.2 923.8,598.1 922.9,597.1 921.8,596.1 920.5,595.2 919.1,594.3 917.5,593.5 916.0,592.7 914.4,592.0 912.8,591.2 911.4,590.5 910.0,589.8 908.6,589.2 907.2,588.6 905.8,588.0 904.5,587.3 903.2,586.7 902.1,585.9 901.0,585.0 900.1,584.0 899.2,582.9 898.4,581.7 897.8,580.4 897.1,579.1 896.5,577.7 896.0,576.4 895.5,575.0 895.1,573.6 894.7,572.0 894.4,570.4 894.1,568.8 893.9,567.3 893.6,565.7 893.3,564.3 893.0,563.0 892.7,561.9 892.4,560.8 892.1,559.9 891.7,559.0 891.4,558.2 890.9,557.3 890.3,556.4 889.5,555.5 888.6,554.5 887.5,553.4 886.3,552.4 885.0,551.3 883.6,550.2 882.2,549.2 880.7,548.1 879.1,547.1 877.4,546.1 875.6,545.1 873.6,544.2 871.7,543.2 869.7,542.3 867.8,541.4 866.0,540.5 864.4,539.7 863.0,538.9 861.8,538.2 860.6,537.6 859.5,536.9 858.5,536.3 857.6,535.5 856.6,534.7 855.6,533.8 854.6,532.7 853.6,531.6 852.6,530.3 851.6,529.0 850.7,527.7 849.8,526.3 849.0,524.9 848.2,523.5 847.5,522.1 846.9,520.7 846.3,519.3 845.8,517.9 845.3,516.5 844.8,515.0 844.3,513.4 843.8,511.8 843.3,510.1 842.7,508.4 842.2,506.6 841.7,504.8 841.2,502.9 840.6,501.0 840.0,499.1 839.4,497.1 838.7,495.1 838.0,493.0 837.3,490.9 836.6,488.7 835.8,486.6 835.1,484.4 834.3,482.1 833.6,479.9 832.9,477.6 832.2,475.3 831.5,472.9 830.8,470.6 830.1,468.2 829.4,465.9 828.7,463.6 828.0,461.4 827.3,459.3 826.5,457.2 825.8,455.2 825.0,453.2 824.2,451.2 823.4,449.3 822.7,447.3 821.9,445.4 821.1,443.5 820.3,441.6 819.5,439.7 818.7,437.8 817.9,435.9 817.1,434.1 816.4,432.3 815.7,430.6 815.0,428.9 814.4,427.3 813.8,425.8 813.2,424.2 812.7,422.7 812.2,421.2 811.8,419.7 811.4,418.2 811.1,416.6 811.0,415.1 810.9,413.5 810.8,411.9 810.8,410.3 810.8,408.8 810.8,407.3 810.7,405.9 810.6,404.5 810.6,403.2 810.6,401.9 810.6,400.6 810.6,399.4 810.5,398.2 810.4,397.1 810.1,396.0 809.8,394.9 809.3,393.9 808.8,392.8 808.3,391.8 807.7,390.9 807.1,390.0 806.5,389.3 805.8,388.6 805.1,388.0 804.4,387.5 803.6,387.1 802.8,386.7 802.0,386.5 801.2,386.3 800.4,386.1 799.6,386.1 798.8,386.1 798.1,386.3 797.3,386.5 796.5,386.7 795.7,387.1 795.0,387.5 794.2,388.0 793.5,388.6 792.8,389.3 792.0,390.0 791.3,390.9 790.6,391.8 789.9,392.7 789.2,393.8 788.5,394.9 787.9,396.0 787.3,397.2 786.7,398.5 786.2,399.8 785.6,401.2 785.1,402.6 784.6,404.1 784.1,405.6 783.6,407.1 783.1,408.7 782.6,410.3 782.1,412.0 781.6,413.7 781.1,415.5 780.7,417.2 780.3,419.0 779.9,420.7 779.6,422.4 779.2,424.1 778.9,425.9 778.6,427.6 778.4,429.3 778.2,431.0 778.1,432.7 778.0,434.3 778.0,435.9 778.0,437.5 778.1,439.1 778.3,440.6 778.5,442.1 778.7,443.6 779.0,445.1 779.3,446.6 779.7,448.1 780.1,449.5 780.6,450.9 781.1,452.3 781.7,453.7 782.3,455.0 783.0,456.4 783.6,457.7 784.3,459.0 785.0,460.2 785.8,461.4 786.7,462.6 787.5,463.8 788.3,465.0 789.1,466.3 789.8,467.6 790.5,469.0 791.1,470.6 791.7,472.1 792.2,473.8 792.8,475.4 793.4,476.9 794.0,478.5 794.7,479.9 795.4,481.2 796.2,482.4 797.0,483.5 797.8,484.6 798.6,485.8 799.5,487.0 800.3,488.3 801.2,489.7 802.1,491.3 803.0,493.1 804.0,494.9 804.9,496.8 805.9,498.8 806.8,500.7 807.7,502.6 808.5,504.4 809.3,506.1 810.1,507.7 810.8,509.3 811.5,510.9 812.2,512.5 812.8,514.1 813.3,515.8 813.7,517.6 814.0,519.5 814.2,521.5 814.2,523.6 814.2,525.7 814.2,527.8 814.2,529.9 814.3,531.9 814.4,533.8 814.6,535.6 814.7,537.4 814.9,539.1 815.1,540.7 815.4,542.4 815.7,544.0 816.1,545.5 816.6,547.1 817.2,548.7 817.9,550.2 818.7,551.7 819.5,553.2 820.4,554.7 821.3,556.1 822.2,557.5 823.2,558.8 824.2,560.0 825.3,561.2 826.4,562.2 827.5,563.3 828.7,564.3 829.8,565.4 831.0,566.4 832.1,567.6 833.2,568.8 834.3,570.1 835.5,571.4 836.6,572.7 837.7,574.0 838.8,575.3 839.9,576.6 840.9,577.9 841.9,579.2 842.8,580.4 843.8,581.7 844.7,583.0 845.6,584.2 846.5,585.5 847.3,586.8 848.2,588.2 849.1,589.6 849.9,591.1 850.7,592.5 851.5,594.0 852.3,595.5 853.1,597.0 854.0,598.5 854.9,600.0 855.8,601.4 856.7,602.6 857.5,603.9 858.5,605.1 859.4,606.4 860.5,607.9 861.6,609.5 862.9,611.4 864.3,613.6 865.9,616.1 867.7,618.8 869.4,621.7 871.3,624.6 873.1,627.4 874.9,630.2 876.7,632.8 878.5,635.3 880.3,637.7 882.1,640.1 883.9,642.5 885.7,644.8 887.4,647.0 889.0,649.1 890.5,651.2 891.9,653.1 893.3,655.0 894.6,656.7 895.8,658.3 896.9,660.0 898.0,661.6 898.9,663.2 899.6,664.9 900.2,666.6 900.6,668.4 901.0,670.1 901.2,671.9 901.3,673.6 901.3,675.4 901.3,677.1 901.2,678.7 901.0,680.3 900.8,681.8 900.4,683.3 899.9,684.8 899.5,686.3 899.0,687.8 898.5,689.3 898.1,690.9 897.7,692.6 897.2,694.4 896.8,696.2 896.3,698.0 895.9,699.9 895.5,701.6 895.2,703.2 895.0,704.7 894.9,706.0 894.8,707.1 894.8,708.1 894.9,709.0 895.0,709.9 895.1,710.9 895.3,711.9 895.5,713.0 895.7,714.2 895.9,715.5 896.1,716.9 896.4,718.2 896.8,719.6 897.2,721.1 897.8,722.6 898.5,724.2 899.4,725.8 900.4,727.6 901.5,729.4 902.8,731.2 904.1,733.1 905.5,735.0 907.0,736.8 908.5,738.5 910.1,740.2 911.7,741.8 913.4,743.4 915.2,745.0 917.0,746.6 918.9,748.1 920.8,749.7 922.8,751.3 924.8,752.9 926.9,754.6 929.0,756.3 931.2,758.0 933.4,759.6 935.6,761.2 937.7,762.7 939.9,764.1 942.1,765.4 944.3,766.6 946.6,767.8 948.8,768.8 951.0,769.9 953.1,770.9 955.1,771.8 957.0,772.7 958.7,773.5 960.3,774.3 961.8,775.0 963.2,775.6 964.5,776.3 965.8,776.9 967.1,777.6 968.4,778.4 969.7,779.2 971.1,780.0 972.4,780.8 973.7,781.6 975.0,782.5 976.2,783.4 977.3,784.4 978.3,785.5 979.2,786.7 980.0,788.1 980.6,789.6 981.2,791.2 981.8,792.8 982.5,794.3 983.2,795.7 984.0,796.9 984.9,798.0 985.8,799.1 986.7,800.1 987.7,801.0 988.7,801.9 989.9,802.7 991.2,803.4 992.6,804.0 994.2,804.5 995.9,805.0 997.8,805.4 999.7,805.7 1001.8,805.9 1003.9,806.1 1006.1,806.2 1008.3,806.2 1010.6,806.1 1013.1,806.0 1015.7,805.8 1018.3,805.5 1021.0,805.2 1023.5,804.8 1026.0,804.4 1028.2,804.0 1030.3,803.6 1032.3,803.2 1034.3,802.8 1036.2,802.3 1037.9,801.8 1039.6,801.2 1041.1,800.5 1042.5,799.8 1043.8,798.9 1044.9,798.0 1046.0,797.0 1046.9,795.9 1047.8,794.7 1048.5,793.6 1049.1,792.4 1049.6,791.2 1050.0,790.0 1050.3,788.8 1050.4,787.5 1050.5,786.3 1050.4,785.0 1050.3,783.7 1050.0,782.5 1049.6,781.2 1049.1,780.0 1048.4,778.8 1047.6,777.5 1046.8,776.3 1045.8,775.1 1044.7,773.9 1043.6,772.6 1042.5,771.3 1041.3,770.0 1040.0,768.6 1038.7,767.2 1037.2,765.8 1035.8,764.4 1034.3,762.9 1032.7,761.4 1031.1,759.9 1029.5,758.4 1027.8,756.8 1026.0,755.3 1024.2,753.7 1022.4,752.1 1020.5,750.4 1018.7,748.8 1016.8,747.0 1014.9,745.2 1013.0,743.3 1011.0,741.4 1009.0,739.4 1007.0,737.4 1005.1,735.4 1003.1,733.4 1001.1,731.4 999.1,729.4 997.0,727.4 995.0,725.3 992.9,723.2 990.9,721.2 989.0,719.3 987.2,717.4 985.5,715.7 984.0,714.1 982.7,712.6 981.5,711.2 980.3,709.9 979.3,708.6 978.2,707.4 977.1,706.2 976.0,705.0 974.9,703.9 973.7,702.8 972.6,701.9 971.5,700.9 970.4,700.0 969.3,699.0 968.1,698.0 966.9,697.0 965.6,695.9 964.2,694.8 962.8,693.7 961.4,692.6 959.9,691.5 958.6,690.3 957.3,689.1 956.2,687.9 955.2,686.6 954.2,685.3 953.3,683.9 952.4,682.6 951.7,681.2 951.0,679.8 950.5,678.5 950.1,677.2 949.8,676.0 949.6,674.8 949.6,673.6 949.6,672.5 949.7,671.4 950.0,670.3 950.4,669.1 950.9,668.0 951.6,666.9 952.4,665.7 953.4,664.5 954.5,663.4 955.6,662.2 956.9,661.1 958.1,659.9 959.3,658.8 960.5,657.7 961.7,656.6 962.9,655.5 964.2,654.4 965.5,653.3 966.9,652.1 968.4,650.9 970.0,649.6 971.7,648.2 973.5,646.6 975.4,645.0 977.4,643.4 979.4,641.7 981.4,640.1 983.4,638.7 985.3,637.4 987.2,636.2 989.0,635.2 990.9,634.2 992.7,633.3 994.6,632.4 996.4,631.7 998.2,631.1 1000.0,630.5 1001.8,630.0 1003.6,629.7 1005.3,629.4 1007.1,629.2 1008.8,629.1 1010.5,629.1 1012.2,629.2 1013.8,629.3 1015.4,629.5 1016.9,629.9 1018.4,630.4 1019.8,630.9 1021.3,631.5 1022.8,632.1 1024.3,632.6 1026.0,633.1 1027.8,633.6 1029.6,634.1 1031.5,634.7 1033.5,635.2 1035.4,635.6 1037.4,636.0 1039.4,636.2 1041.3,636.2 1043.2,636.0 1045.2,635.7 1047.2,635.2 1049.2,634.7 1051.2,634.0 1053.1,633.3 1054.9,632.4 1056.6,631.6 1058.2,630.7 1059.7,629.7 1061.2,628.7 1062.6,627.6 1063.9,626.4 1065.2,625.1 1066.3,623.8 1067.3,622.4 1068.2,620.9 1069.0,619.3 1069.7,617.6 1070.4,615.8 1070.9,614.0 1071.3,612.2 1071.7,610.4 1071.9,608.7 1072.0,607.0 1072.1,605.2 1072.0,603.5 1071.9,601.7 1071.6,600.0 1071.3,598.2 1070.8,596.5 1070.3,594.9 1069.6,593.3 1068.8,591.7 1067.9,590.1 1066.9,588.6 1065.8,587.1 1064.7,585.6 1063.7,584.1 1062.7,582.7 1061.7,581.3 1060.7,580.0 1059.6,578.6 1058.6,577.4 1057.5,576.1 1056.6,574.7 1055.7,573.4 1055.0,572.0 1054.4,570.5 1053.8,569.1 1053.3,567.5 1052.9,566.0 1052.5,564.4 1052.3,562.9 1052.1,561.3 1052.0,559.8 1052.0,558.3 1052.1,556.8 1052.3,555.3 1052.5,553.8 1052.9,552.3 1053.3,550.8 1053.8,549.2 1054.3,547.5 1055.0,545.7 1055.7,543.8 1056.6,541.8 1057.6,539.8 1058.5,537.8 1059.5,535.9 1060.4,534.0 1061.2,532.2 1061.9,530.5 1062.6,528.9 1063.3,527.4 1063.9,525.9 1064.6,524.4 1065.2,522.9 1065.9,521.5 1066.6,520.0 1067.3,518.5 1068.1,517.1 1068.9,515.6 1069.6,514.2 1070.4,512.8 1071.2,511.3 1072.1,509.8 1072.9,508.2 1073.7,506.5 1074.6,504.7 1075.5,502.9 1076.4,501.0 1077.3,499.1 1078.2,497.3 1079.1,495.7 1080.0,494.1 1080.9,492.7 1081.8,491.3 1082.7,490.1 1083.6,488.9 1084.4,487.8 1085.3,486.7 1086.2,485.7 1087.1,484.7 1088.0,483.8 1088.8,483.0 1089.6,482.2 1090.5,481.5 1091.3,480.9 1092.2,480.2 1093.1,479.5 1094.1,478.8 1095.2,478.1 1096.4,477.4 1097.6,476.7 1098.9,476.1 1100.2,475.4 1101.4,474.6 1102.5,473.8 1103.5,472.9 1104.4,471.9 1105.2,470.9 1106.0,469.8 1106.7,468.6 1107.4,467.4 1107.9,466.1 1108.4,464.8 1108.8,463.5 1109.1,462.1 1109.3,460.8 1109.4,459.3 1109.5,457.9 1109.5,456.3 1109.4,454.7 1109.3,452.9 1109.2,451.0 1109.0,448.9 1108.8,446.7 1108.5,444.3 1108.2,441.8 1107.9,439.3 1107.5,436.7 1107.1,434.2 1106.7,431.7 1106.3,429.3 1105.9,426.8 1105.4,424.4 1104.9,422.0 1104.4,419.5 1103.9,417.0 1103.4,414.4 1102.9,411.8 1102.4,409.1 1101.8,406.2 1101.2,403.3 1100.6,400.4 1100.0,397.4 1099.4,394.5 1098.8,391.6 1098.3,388.9 1097.8,386.3 1097.3,383.7 1096.7,381.2 1096.2,378.7 1095.8,376.2 1095.3,373.8 1094.8,371.4 1094.4,369.0 1094.0,366.6 1093.6,364.1 1093.1,361.7 1092.8,359.3 1092.4,357.0 1092.0,354.7 1091.7,352.6 1091.4,350.6 1091.1,348.7 1091.0,347.0 1090.8,345.4 1090.7,343.8 1090.5,342.4 1090.3,341.0 1090.1,339.7 1089.8,338.4 1089.5,337.2 1089.1,336.1 1088.7,335.1 1088.3,334.2 1087.8,333.3 1087.3,332.4 1086.7,331.6 1086.0,330.7 1085.2,329.9 1084.4,329.0 1083.5,328.2 1082.5,327.5 1081.5,326.7 1080.5,326.0 1079.5,325.3 1078.4,324.6 1077.3,324.0 1076.1,323.4 1074.8,322.8 1073.6,322.2 1072.3,321.7 1071.2,321.1 1070.1,320.6 1069.2,320.0 1068.4,319.4 1067.7,318.9 1067.1,318.3 1066.6,317.8 1066.1,317.2 1065.7,316.5 1065.4,315.9 1065.2,315.1 1065.0,314.3 1064.9,313.4 1064.9,312.5 1064.9,311.5 1065.1,310.5 1065.3,309.5 1065.5,308.4 1065.9,307.3 1066.4,306.1 1067.0,304.9 1067.8,303.7 1068.6,302.4 1069.5,301.1 1070.3,299.7 1071.1,298.4 1071.7,297.0 1072.3,295.6 1072.8,294.2 1073.4,292.7 1073.8,291.2 1074.3,289.7 1074.6,288.3 1074.9,286.8 1075.0,285.3 1075.0,283.8 1075.0,282.4 1074.8,280.9 1074.6,279.4 1074.3,278.0 1073.9,276.5 1073.5,275.1 1073.0,273.7 1072.5,272.4 1071.8,271.1 1071.1,269.8 1070.4,268.5 1069.6,267.3 1068.8,266.0 1068.0,264.7 1067.2,263.3 1066.4,261.9 1065.6,260.5 1064.7,259.0 1063.9,257.6 1063.0,256.1 1062.2,254.5 1061.3,252.8 1060.5,251.0 1059.7,249.1 1058.8,247.0 1058.0,244.7 1057.1,242.5 1056.3,240.2 1055.5,237.9 1054.7,235.8 1054.0,233.8 1053.3,231.9 1052.7,230.2 1052.1,228.5 1051.5,226.9 1050.9,225.3 1050.4,223.7 1050.0,222.2 1049.6,220.6 1049.3,219.0 1049.0,217.5 1048.7,216.0 1048.5,214.5 1048.4,213.1 1048.3,211.6 1048.2,210.2 1048.1,208.8 1048.1,207.4 1048.2,206.1 1048.4,204.7 1048.5,203.4 1048.7,202.1 1048.8,200.9 1048.9,199.7 1048.8,198.5 1048.6,197.4 1048.4,196.3 1048.2,195.2 1047.9,194.2 1047.5,193.2 1047.0,192.2 1046.5,191.3 1045.9,190.4 1045.2,189.5 1044.4,188.7 1043.6,187.9 1042.7,187.1 1041.7,186.4 1040.7,185.7 1039.6,185.1 1038.5,184.6 1037.4,184.1 1036.2,183.7 1035.0,183.3 1033.8,183.0 1032.5,182.8 1031.2,182.6 1029.7,182.5 1028.2,182.4 1026.6,182.4 1025.0,182.5 1023.3,182.7 1021.6,182.9 1019.7,183.2 1017.8,183.5 1015.7,183.8 1013.5,184.1 1011.1,184.4 1008.6,184.8 1006.0,185.2 1003.2,185.6 1000.4,186.1 997.5,186.5 994.5,187.0 991.5,187.5 988.4,188.0 985.0,188.5 981.6,189.1 978.1,189.6 974.7,190.2 971.3,190.8 968.0,191.3 965.0,191.9 962.2,192.5 959.5,193.0 956.9,193.6 954.4,194.2 952.0,194.8 949.6,195.4 947.3,195.9" fill="none" stroke="#ff8010" stroke-width="1.35"/>
 <rect x="648.5" y="179.5" width="146" height="91" fill="#fff" stroke="#000"/>
 <g stroke-width="2">
  <line x1="656" y1="192" x2="674" y2="192" stroke="#ff7f0e"/>
  <line x1="656" y1="214" x2="674" y2="214" stroke="#0b5f87"/>
  <line x1="656" y1="236" x2="674" y2="236" stroke="#2ca02c"/>
  <line x1="656" y1="258" x2="674" y2="258" stroke="#a0a0a0"/>
 </g>
 <g font-family="Liberation Sans" font-size="11.65" fill="#000">
  <text x="680" y="197">Generated trajectory</text>
  <text x="680" y="219">Left border</text>
  <text x="680" y="241">Right border</text>
  <text x="680" y="263">Reference trajectory</text>
 </g>
 <line x1="664" y1="792.8" x2="664" y2="748" stroke="#ff1010" stroke-width="2"/>
 <path d="M660.4 752 L664 740.5 L667.6 752Z" fill="#ff1010"/>
 <line x1="663" y1="791.8" x2="706" y2="791.8" stroke="#1a9e1a" stroke-width="2"/>
 <path d="M703.5 788.2 L715 791.8 L703.5 795.4Z" fill="#1a9e1a"/>
 <g font-family="Liberation Sans" font-size="11" fill="#000">
  <text x="663.5" y="739">y [m]</text>
  <text x="714" y="789">x [m]</text>
 </g>
</svg>

<svg class="a" style="left:643px;top:144px" width="160" height="32">
 <defs>
  <g id="mag">
   <circle cx="0" cy="0" r="5.6" fill="none" stroke="#444" stroke-width="1.3"/>
   <path d="M-3.6 4.3 L-8.8 9.2" stroke="#444" stroke-width="2.8" stroke-linecap="round"/>
   <path d="M-3.6 4.3 L-8.8 9.2" stroke="#ddd" stroke-width="0.9" stroke-linecap="round"/>
  </g>
 </defs>
 <use href="#mag" x="14.9" y="13.9"/>
 <path d="M12.2 14.2 H17.6 M14.9 11.4 V17" stroke="#444" stroke-width="1"/>
 <use href="#mag" x="41.8" y="13.9"/>
 <path d="M39 14.2 H44.6" stroke="#444" stroke-width="1.1"/>
 <use href="#mag" x="69" y="13.9"/>
 <path d="M66.8 11.7 L71.2 16.1 M71.2 11.7 L66.8 16.1" stroke="#444" stroke-width="1.1" stroke-dasharray="1.3,1"/>
 <line x1="83.5" y1="3" x2="83.5" y2="29" stroke="#d4d4d4"/>
 <rect x="88" y="2" width="25" height="28" rx="2.5" fill="#cfe5ec"/>
 <path d="M88 4.5 Q88 2 90.5 2 H110.5 Q113 2 113 4.5 V4 H88Z" fill="#5bc3dc"/><rect x="88.5" y="2" width="24" height="2" rx="1" fill="#5bc3dc"/>
 <use href="#mag" x="101.8" y="14.9"/>
 <path d="M99.2 13.7 V12.3 H100.6 M103 12.3 H104.4 V13.7 M104.4 16.1 V17.5 H103 M100.6 17.5 H99.2 V16.1" fill="none" stroke="#444" stroke-width="1.1"/>
 <line x1="116.5" y1="3" x2="116.5" y2="29" stroke="#d4d4d4"/>
 <rect x="121" y="2" width="25" height="28" rx="2.5" fill="#cfe5ec"/>
 <rect x="121.5" y="2" width="24" height="2" rx="1" fill="#5bc3dc"/>
 <rect x="127" y="19.6" width="13" height="3.4" fill="#fff"/>
 <rect x="128" y="9" width="13.2" height="10.6" fill="#a8e020"/>
 <rect x="128.6" y="9.6" width="12" height="9.4" fill="#10b030"/>
 <rect x="129.2" y="10.2" width="10.8" height="8.2" fill="#000"/>
 <rect x="130.2" y="11.2" width="8.8" height="6.2" fill="#fff"/>
 <rect x="131.3" y="13.6" width="2.6" height="1.2" fill="#e02020"/>
 <path d="M135.5 12.4 V15.3 H137" fill="none" stroke="#000" stroke-width="1"/>
 <path d="M126.5 10 V23.4 H140" fill="none" stroke="#000" stroke-width="1.3"/>
 <path d="M124.8 11 L126.5 8.6 L128.2 11Z M139 21.7 L141.5 23.4 L139 25.1Z" fill="#000"/>
</svg>
</div></body></html>
